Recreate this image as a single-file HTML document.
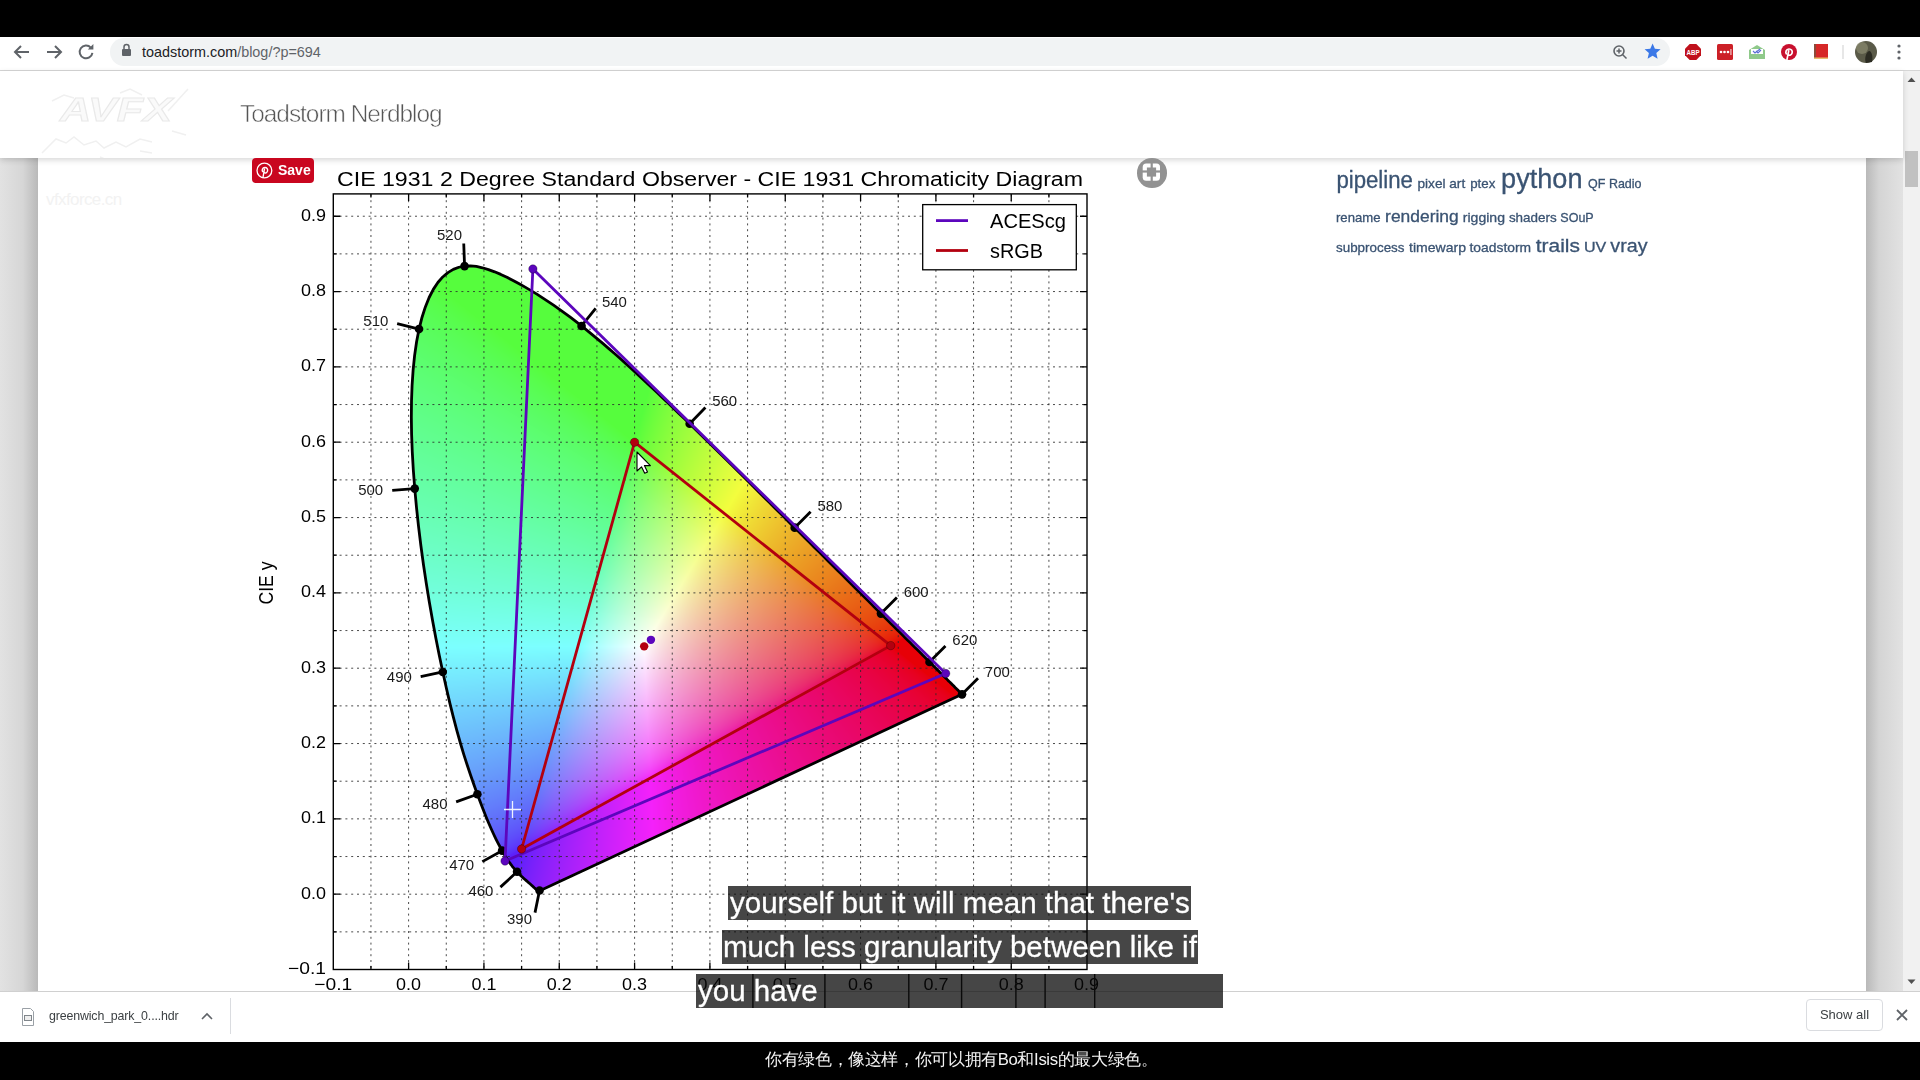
<!DOCTYPE html>
<html><head><meta charset="utf-8">
<style>
*{margin:0;padding:0;box-sizing:border-box}
html,body{width:1920px;height:1080px;overflow:hidden;background:#fff;font-family:"Liberation Sans",sans-serif}
.a{position:absolute}
#top{left:0;top:0;width:1920px;height:37px;background:#000}
#tb{left:0;top:37px;width:1920px;height:34px;background:#fff;border-bottom:1px solid #d6d6d6}
#pill{left:110px;top:38px;width:1560px;height:28px;border-radius:14px;background:#f1f3f4}
#url{left:142px;top:44px;font-size:14.4px;color:#5f6368;white-space:nowrap}
#url b{font-weight:normal;color:#202124}
#lstrip{left:0;top:71px;width:38px;height:921px;background:linear-gradient(90deg,#e2e2e2 0%,#d6d6d6 60%,#b9b9b9 100%)}
#rstrip{left:1866px;top:71px;width:37px;height:921px;background:linear-gradient(90deg,#b9b9b9 0%,#d4d4d4 35%,#e2e2e2 100%)}
#sb{left:1903px;top:71px;width:17px;height:921px;background:#f1f1f1}
#thumb{left:1905px;top:151px;width:13px;height:36px;background:#c1c1c1}
#hdr{left:0;top:71px;width:1903px;height:87px;background:#fff;box-shadow:0 2px 6px rgba(0,0,0,0.16)}
#brand{left:240px;top:100px;font-size:24.4px;color:#555;letter-spacing:-1px;-webkit-text-stroke:0.55px #fff;white-space:nowrap}
#cv{left:400px;top:255px}
#chart{left:0;top:0}
#pin{left:252px;top:158px;width:61.8px;height:24.8px;border-radius:4px;background:#c9061f}
#pin span{position:absolute;left:26px;top:4px;font-size:14px;font-weight:bold;color:#fff}
#fs{left:1137px;top:158.3px;width:29.5px;height:29.5px;border-radius:50%;background:#929292}
#tags{left:1336px;top:160px;width:330px;color:#3b5172;white-space:nowrap}
#tags span{position:absolute}
.sub{position:absolute;background:rgba(8,8,8,0.75);color:#fff;-webkit-text-stroke:0.3px #fff;font-size:29.5px;line-height:34px;height:34.3px;white-space:nowrap}
#dl{left:0;top:991px;width:1920px;height:50px;background:#fff;border-top:1px solid #d0d0d0}
#bot{left:0;top:1042px;width:1920px;height:38px;background:#000}
#zh{left:765px;top:1048px;white-space:nowrap;color:#f4f4f4;font-size:16.7px;letter-spacing:-0.37px}
</style></head><body>
<div id="top" class="a"></div>
<div id="tb" class="a"></div>
<div id="pill" class="a"></div>
<div id="url" class="a"><b>toadstorm.com</b>/blog/?p=694</div>
<svg class="a" style="left:0;top:37px" width="1920" height="34">
 <g fill="none" stroke="#5f6368" stroke-width="2">
  <path d="M29 15H15M21 9l-6 6 6 6"/>
  <path d="M47 15H61M55 9l6 6-6 6"/>
 </g>
 <path d="M90.8 10.6A6.4 6.4 0 1 0 92.4 15.8" fill="none" stroke="#5f6368" stroke-width="2"/>
 <path d="M87.8 12.6H93.4V7Z" fill="#5f6368"/>
 <rect x="122" y="12" width="9" height="7" rx="1" fill="#5f6368"/>
 <path d="M124 12.5V10a2.5 2.5 0 0 1 5 0v2.5" fill="none" stroke="#5f6368" stroke-width="1.5"/>
 <circle cx="1619" cy="14" r="5" fill="none" stroke="#5f6368" stroke-width="1.6"/>
 <path d="M1622.5 17.5l4 4M1619 11.5v5M1616.5 14h5" stroke="#5f6368" stroke-width="1.5"/>
 <path d="M1652.6 6.5l2.3 5.3 5.7.5-4.3 3.8 1.3 5.6-5-3-5 3 1.3-5.6-4.3-3.8 5.7-.5z" fill="#3b78e7"/>
 <path d="M1689.7 7h6.6l4.7 4.7v6.6l-4.7 4.7h-6.6l-4.7-4.7v-6.6z" fill="#c0111c"/>
 <text x="1686.5" y="18" font-size="7" font-weight="bold" fill="#fff" textLength="13" lengthAdjust="spacingAndGlyphs">ABP</text>
 <rect x="1717" y="7" width="16" height="16" rx="1.5" fill="#cc2027"/>
 <g fill="#fff"><circle cx="1721" cy="15" r="1.3"/><circle cx="1724.5" cy="15" r="1.3"/><circle cx="1728" cy="15" r="1.3"/><rect x="1730.5" y="12" width="0.9" height="6"/></g>
 <path d="M1749 13l8-5 8 5v9h-16z" fill="#8fc98a"/>
 <path d="M1751 12h12v5h-12z" fill="#fff"/>
 <path d="M1753 14l2 2 5-4M1756 14l2 2 3-3" stroke="#5b6fd4" stroke-width="1.1" fill="none"/>
 <circle cx="1789" cy="15" r="8" fill="#c8102e"/>
 <path d="M1786.3 16.8c-1-1.8-.3-4.6 2.6-4.8 2.7-.1 3.8 2 3.2 4.1-.6 2-2.4 2.7-3.8 1.7M1788.7 13.9l-1.7 8.4" stroke="#fff" stroke-width="1.7" fill="none" stroke-linecap="round"/>
 <rect x="1814" y="7" width="14" height="15" fill="#d62828"/>
 <rect x="1814" y="7" width="2" height="15" fill="#8b4b3a"/>
 <rect x="1814" y="20.5" width="14" height="1.5" fill="#e8c070"/>
 <rect x="1842.5" y="8" width="1" height="14" fill="#d0d0d0"/>
 <circle cx="1866" cy="15" r="11" fill="#5a5a48"/>
 <circle cx="1862" cy="11" r="6" fill="#8a8a70" opacity="0.7"/>
 <path d="M1866 26c-2-4 0-11 3-12 3 0 4 6 3 11z" fill="#2b2b22"/>
 <g fill="#5f6368"><circle cx="1899" cy="9" r="1.6"/><circle cx="1899" cy="15" r="1.6"/><circle cx="1899" cy="21" r="1.6"/></g>
</svg>
<div id="lstrip" class="a"></div>
<div id="rstrip" class="a"></div>
<div id="sb" class="a"></div>
<div id="thumb" class="a"></div>
<svg class="a" style="left:1903px;top:71px" width="17" height="921"><path d="M4.5 11l4-4.5 4 4.5z" fill="#505050"/><path d="M4.5 908.5l4 4.5 4-4.5z" fill="#505050"/></svg>
<div class="a" style="left:46px;top:190px;font-size:17px;color:#f2f2f2;letter-spacing:-0.6px">vfxforce.cn</div>
<svg class="a" style="left:0;top:0" width="1920" height="1080"><defs><clipPath id="lc"><path d="M540.85 890.21 L540.79 890.22 L540.73 890.22 L540.67 890.23 L540.61 890.24 L540.55 890.24 L540.49 890.25 L540.44 890.26 L540.39 890.26 L540.34 890.27 L540.29 890.27 L540.25 890.26 L540.22 890.25 L540.18 890.26 L540.12 890.27 L540.06 890.30 L539.98 890.34 L539.91 890.38 L539.84 890.42 L539.79 890.45 L539.76 890.46 L539.74 890.46 L539.73 890.45 L539.72 890.45 L539.70 890.44 L539.68 890.45 L539.65 890.46 L539.62 890.48 L539.59 890.49 L539.56 890.50 L539.52 890.50 L539.49 890.49 L539.45 890.48 L539.41 890.48 L539.38 890.48 L539.34 890.49 L539.31 890.51 L539.27 890.54 L539.24 890.56 L539.21 890.57 L539.17 890.59 L539.14 890.59 L539.10 890.60 L539.05 890.60 L539.00 890.60 L538.94 890.60 L538.87 890.60 L538.80 890.59 L538.73 890.59 L538.67 890.58 L538.60 890.58 L538.54 890.59 L538.47 890.59 L538.39 890.58 L538.31 890.57 L538.23 890.56 L538.15 890.54 L538.07 890.52 L537.97 890.48 L537.86 890.43 L537.72 890.36 L537.57 890.27 L537.41 890.18 L537.24 890.08 L537.07 889.97 L536.89 889.84 L536.70 889.70 L536.50 889.55 L536.29 889.38 L536.06 889.20 L535.82 889.00 L535.55 888.79 L535.26 888.56 L534.96 888.31 L534.65 888.04 L534.32 887.76 L533.98 887.45 L533.63 887.12 L533.26 886.77 L532.87 886.40 L532.45 886.02 L532.01 885.62 L531.55 885.21 L531.05 884.77 L530.52 884.30 L529.96 883.81 L529.36 883.28 L528.73 882.73 L528.05 882.14 L527.34 881.51 L526.60 880.86 L525.82 880.18 L525.00 879.47 L524.15 878.72 L523.27 877.92 L522.34 877.07 L521.36 876.16 L520.34 875.18 L519.28 874.14 L518.18 873.02 L517.05 871.82 L515.87 870.55 L514.66 869.18 L513.40 867.68 L512.08 866.02 L510.67 864.16 L509.17 862.04 L507.56 859.64 L505.84 856.95 L504.01 853.95 L502.10 850.66 L500.10 847.05 L498.02 843.10 L495.84 838.77 L493.55 834.01 L491.16 828.78 L488.65 823.02 L486.02 816.71 L483.27 809.83 L480.39 802.34 L477.37 794.24 L474.20 785.49 L470.88 776.03 L467.44 765.82 L463.92 754.82 L460.36 743.00 L456.81 730.38 L453.28 716.98 L449.78 702.79 L446.29 687.79 L442.79 671.99 L439.30 655.42 L435.87 638.15 L432.52 620.30 L429.31 601.98 L426.27 583.31 L423.44 564.44 L420.86 545.46 L418.53 526.43 L416.49 507.45 L414.75 488.61 L413.33 470.04 L412.27 451.93 L411.60 434.35 L411.34 417.35 L411.51 400.92 L412.10 385.05 L413.13 369.81 L414.62 355.33 L416.59 341.72 L419.05 329.08 L421.98 317.46 L425.36 306.90 L429.14 297.51 L433.32 289.36 L437.87 282.51 L442.75 276.95 L447.90 272.60 L453.29 269.39 L458.86 267.25 L464.57 266.10 L470.41 265.88 L476.35 266.48 L482.38 267.76 L488.47 269.58 L494.60 271.82 L500.76 274.41 L506.94 277.30 L513.08 280.43 L519.16 283.73 L525.15 287.14 L531.04 290.63 L536.84 294.18 L542.57 297.82 L548.25 301.56 L553.89 305.40 L559.49 309.34 L565.05 313.36 L570.58 317.48 L576.09 321.68 L581.57 325.96 L587.05 330.34 L592.51 334.79 L597.95 339.32 L603.39 343.91 L608.81 348.57 L614.22 353.28 L619.62 358.06 L625.02 362.89 L630.41 367.76 L635.80 372.68 L641.19 377.65 L646.58 382.66 L651.97 387.71 L657.35 392.78 L662.74 397.89 L668.12 403.03 L673.51 408.19 L678.89 413.38 L684.28 418.58 L689.66 423.80 L695.04 429.04 L700.41 434.28 L705.78 439.53 L711.14 444.79 L716.50 450.05 L721.85 455.31 L727.19 460.58 L732.51 465.84 L737.82 471.09 L743.11 476.33 L748.39 481.57 L753.64 486.79 L758.87 491.99 L764.08 497.17 L769.26 502.33 L774.41 507.46 L779.53 512.57 L784.61 517.63 L789.65 522.66 L794.66 527.65 L799.62 532.59 L804.53 537.49 L809.41 542.34 L814.22 547.14 L818.99 551.87 L823.69 556.55 L828.33 561.17 L832.91 565.72 L837.42 570.20 L841.86 574.63 L846.23 578.98 L850.52 583.27 L854.72 587.46 L858.82 591.55 L862.79 595.52 L866.63 599.35 L870.36 603.06 L873.97 606.66 L877.50 610.17 L880.95 613.60 L884.32 616.97 L887.62 620.25 L890.83 623.44 L893.93 626.53 L896.91 629.49 L899.77 632.33 L902.52 635.05 L905.15 637.66 L907.68 640.17 L910.12 642.59 L912.46 644.92 L914.71 647.16 L916.87 649.31 L918.93 651.36 L920.90 653.33 L922.79 655.22 L924.59 657.01 L926.31 658.73 L927.94 660.37 L929.51 661.93 L931.01 663.41 L932.44 664.84 L933.80 666.19 L935.11 667.49 L936.37 668.74 L937.56 669.92 L938.70 671.06 L939.80 672.15 L940.85 673.20 L941.87 674.22 L942.86 675.20 L943.82 676.16 L944.74 677.07 L945.63 677.96 L946.48 678.81 L947.30 679.63 L948.08 680.41 L948.84 681.16 L949.56 681.88 L950.25 682.57 L950.91 683.23 L951.54 683.86 L952.15 684.47 L952.72 685.04 L953.26 685.57 L953.76 686.08 L954.24 686.55 L954.68 686.98 L955.09 687.40 L955.49 687.79 L955.87 688.17 L956.23 688.53 L956.57 688.87 L956.90 689.20 L957.21 689.51 L957.50 689.80 L957.77 690.07 L958.03 690.33 L958.27 690.57 L958.49 690.79 L958.69 690.99 L958.87 691.17 L959.03 691.33 L959.18 691.48 L959.33 691.63 L959.47 691.77 L959.61 691.91 L959.75 692.05 L959.88 692.18 L960.01 692.31 L960.13 692.43 L960.24 692.54 L960.35 692.65 L960.45 692.75 L960.56 692.86 L960.66 692.96 L960.77 693.07 L960.88 693.18 L960.98 693.28 L961.08 693.38 L961.18 693.48 L961.28 693.58 L961.38 693.68 L961.47 693.77 L961.56 693.86 L961.63 693.93 L961.69 693.99 L961.74 694.04 L961.78 694.08 L961.82 694.12 L961.85 694.15 L961.89 694.19 L961.92 694.22 L961.94 694.24 L961.97 694.27 L961.99 694.29 L962.01 694.31 L962.03 694.33 L962.04 694.34 L962.04 694.34 L962.04 694.34 L962.04 694.34 L962.04 694.34 L962.04 694.34 L962.04 694.34 L962.04 694.34 L962.04 694.34 L962.04 694.34 L962.04 694.34 L962.04 694.34 L962.04 694.34 L962.04 694.34 L962.04 694.34 L962.04 694.34 L962.04 694.34 L962.04 694.34 L962.04 694.34 L962.04 694.34 L962.04 694.34 L962.04 694.34 L962.04 694.34 L962.04 694.34 L962.04 694.34 L962.04 694.34 L962.04 694.34 L962.04 694.34 L962.04 694.34 L962.04 694.34 L962.04 694.34 L962.04 694.34 L962.04 694.34 L962.04 694.34 L962.04 694.34 L962.04 694.34 L962.04 694.34 L962.04 694.34 L962.04 694.34 L962.04 694.34 L962.04 694.34 L962.04 694.34 L962.04 694.34 L962.04 694.34 L962.04 694.34 L962.04 694.34 L962.04 694.34 L962.04 694.34 L962.04 694.34 L962.04 694.34 L962.04 694.34 L962.04 694.34 L962.04 694.34 L962.04 694.34 L962.04 694.34 L962.04 694.34 L962.04 694.34 L962.04 694.34 L962.04 694.34 L962.04 694.34 L962.04 694.34 L962.04 694.34 L962.04 694.34 L962.04 694.34 L962.04 694.34 L962.04 694.34 L962.04 694.34 L962.04 694.34 L962.04 694.34 L962.04 694.34 L962.04 694.34 L962.04 694.34 L962.04 694.34 L962.04 694.34 L962.04 694.34 L962.04 694.34 L962.04 694.34 L962.04 694.34 L962.04 694.34 L962.04 694.34 L962.04 694.34 L962.04 694.34 L962.04 694.34 L962.04 694.34 L962.04 694.34 L962.04 694.34 L962.04 694.34 L962.04 694.34 L962.04 694.34 L962.04 694.34 L962.04 694.34 L962.04 694.34 L962.04 694.34 L962.04 694.34 L962.04 694.34 L962.04 694.34 L962.04 694.34 L962.04 694.34 L962.04 694.34 L962.04 694.34 L962.04 694.34 L962.04 694.34 L962.04 694.34 L962.04 694.34 L962.04 694.34 L962.04 694.34 L962.04 694.34 L962.04 694.34 L962.04 694.34 L962.04 694.34 L962.04 694.34 L962.04 694.34 L962.04 694.34 L962.04 694.34 L962.04 694.34 L962.04 694.34 L962.04 694.34 L962.04 694.34 L962.04 694.34 L962.04 694.34 L962.04 694.34 L962.04 694.34 L962.04 694.34 L962.04 694.34 L962.04 694.34 L962.04 694.34 L962.04 694.34 L962.04 694.34 L962.04 694.34 L962.04 694.34 L962.04 694.34 L962.04 694.34Z"/></clipPath><filter id="bl" x="-5%" y="-5%" width="110%" height="110%"><feGaussianBlur stdDeviation="6"/></filter></defs><g clip-path="url(#lc)"><g filter="url(#bl)"><rect x="448" y="255" width="12" height="12" fill="#56fd3d"/><rect x="460" y="255" width="12" height="12" fill="#56fd3d"/><rect x="472" y="255" width="12" height="12" fill="#56fd3d"/><rect x="484" y="255" width="12" height="12" fill="#56fd3d"/><rect x="436" y="267" width="12" height="12" fill="#56fd3d"/><rect x="448" y="267" width="12" height="12" fill="#56fd3d"/><rect x="460" y="267" width="12" height="12" fill="#56fd3d"/><rect x="472" y="267" width="12" height="12" fill="#56fd3d"/><rect x="484" y="267" width="12" height="12" fill="#56fd3d"/><rect x="496" y="267" width="12" height="12" fill="#56fd3d"/><rect x="508" y="267" width="12" height="12" fill="#56fd3d"/><rect x="424" y="279" width="12" height="12" fill="#57fd41"/><rect x="436" y="279" width="12" height="12" fill="#56fd3d"/><rect x="448" y="279" width="12" height="12" fill="#56fd3d"/><rect x="460" y="279" width="12" height="12" fill="#56fd3d"/><rect x="472" y="279" width="12" height="12" fill="#56fd3d"/><rect x="484" y="279" width="12" height="12" fill="#56fd3d"/><rect x="496" y="279" width="12" height="12" fill="#56fd3d"/><rect x="508" y="279" width="12" height="12" fill="#56fd3d"/><rect x="520" y="279" width="12" height="12" fill="#56fd3d"/><rect x="532" y="279" width="12" height="12" fill="#56fd3d"/><rect x="412" y="291" width="12" height="12" fill="#58fd4f"/><rect x="424" y="291" width="12" height="12" fill="#57fd49"/><rect x="436" y="291" width="12" height="12" fill="#57fd43"/><rect x="448" y="291" width="12" height="12" fill="#56fd3d"/><rect x="460" y="291" width="12" height="12" fill="#56fd3d"/><rect x="472" y="291" width="12" height="12" fill="#56fd3d"/><rect x="484" y="291" width="12" height="12" fill="#56fd3d"/><rect x="496" y="291" width="12" height="12" fill="#56fd3d"/><rect x="508" y="291" width="12" height="12" fill="#56fd3d"/><rect x="520" y="291" width="12" height="12" fill="#56fd3d"/><rect x="532" y="291" width="12" height="12" fill="#56fd3d"/><rect x="544" y="291" width="12" height="12" fill="#56fd3d"/><rect x="556" y="291" width="12" height="12" fill="#56fd3d"/><rect x="412" y="303" width="12" height="12" fill="#59fd56"/><rect x="424" y="303" width="12" height="12" fill="#58fd51"/><rect x="436" y="303" width="12" height="12" fill="#58fd4b"/><rect x="448" y="303" width="12" height="12" fill="#57fd45"/><rect x="460" y="303" width="12" height="12" fill="#56fd3d"/><rect x="472" y="303" width="12" height="12" fill="#56fd3d"/><rect x="484" y="303" width="12" height="12" fill="#56fd3d"/><rect x="496" y="303" width="12" height="12" fill="#56fd3d"/><rect x="508" y="303" width="12" height="12" fill="#56fd3d"/><rect x="520" y="303" width="12" height="12" fill="#56fd3d"/><rect x="532" y="303" width="12" height="12" fill="#56fd3d"/><rect x="544" y="303" width="12" height="12" fill="#56fd3d"/><rect x="556" y="303" width="12" height="12" fill="#56fd3d"/><rect x="568" y="303" width="12" height="12" fill="#56fd3d"/><rect x="412" y="315" width="12" height="12" fill="#59fd5c"/><rect x="424" y="315" width="12" height="12" fill="#59fd57"/><rect x="436" y="315" width="12" height="12" fill="#58fd53"/><rect x="448" y="315" width="12" height="12" fill="#58fd4d"/><rect x="460" y="315" width="12" height="12" fill="#57fd47"/><rect x="472" y="315" width="12" height="12" fill="#57fd40"/><rect x="484" y="315" width="12" height="12" fill="#56fd3d"/><rect x="496" y="315" width="12" height="12" fill="#56fd3d"/><rect x="508" y="315" width="12" height="12" fill="#56fd3d"/><rect x="520" y="315" width="12" height="12" fill="#56fd3d"/><rect x="532" y="315" width="12" height="12" fill="#56fd3d"/><rect x="544" y="315" width="12" height="12" fill="#56fd3d"/><rect x="556" y="315" width="12" height="12" fill="#56fd3d"/><rect x="568" y="315" width="12" height="12" fill="#56fd3d"/><rect x="580" y="315" width="12" height="12" fill="#56fd3d"/><rect x="412" y="327" width="12" height="12" fill="#5afd62"/><rect x="424" y="327" width="12" height="12" fill="#5afd5e"/><rect x="436" y="327" width="12" height="12" fill="#59fd59"/><rect x="448" y="327" width="12" height="12" fill="#59fd54"/><rect x="460" y="327" width="12" height="12" fill="#58fd4f"/><rect x="472" y="327" width="12" height="12" fill="#57fd49"/><rect x="484" y="327" width="12" height="12" fill="#57fd42"/><rect x="496" y="327" width="12" height="12" fill="#56fd3d"/><rect x="508" y="327" width="12" height="12" fill="#56fd3d"/><rect x="520" y="327" width="12" height="12" fill="#56fd3d"/><rect x="532" y="327" width="12" height="12" fill="#56fd3d"/><rect x="544" y="327" width="12" height="12" fill="#56fd3d"/><rect x="556" y="327" width="12" height="12" fill="#56fd3d"/><rect x="568" y="327" width="12" height="12" fill="#56fd3d"/><rect x="580" y="327" width="12" height="12" fill="#56fd3d"/><rect x="592" y="327" width="12" height="12" fill="#56fd3d"/><rect x="400" y="339" width="12" height="12" fill="#5bfd6b"/><rect x="412" y="339" width="12" height="12" fill="#5bfd68"/><rect x="424" y="339" width="12" height="12" fill="#5afd64"/><rect x="436" y="339" width="12" height="12" fill="#5afd60"/><rect x="448" y="339" width="12" height="12" fill="#59fd5b"/><rect x="460" y="339" width="12" height="12" fill="#59fd57"/><rect x="472" y="339" width="12" height="12" fill="#58fd51"/><rect x="484" y="339" width="12" height="12" fill="#58fd4b"/><rect x="496" y="339" width="12" height="12" fill="#57fd44"/><rect x="508" y="339" width="12" height="12" fill="#56fd3d"/><rect x="520" y="339" width="12" height="12" fill="#56fd3d"/><rect x="532" y="339" width="12" height="12" fill="#56fd3d"/><rect x="544" y="339" width="12" height="12" fill="#56fd3d"/><rect x="556" y="339" width="12" height="12" fill="#56fd3d"/><rect x="568" y="339" width="12" height="12" fill="#56fd3d"/><rect x="580" y="339" width="12" height="12" fill="#56fd3d"/><rect x="592" y="339" width="12" height="12" fill="#56fd3d"/><rect x="604" y="339" width="12" height="12" fill="#56fd3d"/><rect x="616" y="339" width="12" height="12" fill="#56fd3d"/><rect x="400" y="351" width="12" height="12" fill="#5cfe71"/><rect x="412" y="351" width="12" height="12" fill="#5cfe6d"/><rect x="424" y="351" width="12" height="12" fill="#5bfd6a"/><rect x="436" y="351" width="12" height="12" fill="#5bfd66"/><rect x="448" y="351" width="12" height="12" fill="#5afd62"/><rect x="460" y="351" width="12" height="12" fill="#5afd5d"/><rect x="472" y="351" width="12" height="12" fill="#59fd59"/><rect x="484" y="351" width="12" height="12" fill="#58fd53"/><rect x="496" y="351" width="12" height="12" fill="#58fd4d"/><rect x="508" y="351" width="12" height="12" fill="#57fd46"/><rect x="520" y="351" width="12" height="12" fill="#57fd3e"/><rect x="532" y="351" width="12" height="12" fill="#56fd3d"/><rect x="544" y="351" width="12" height="12" fill="#56fd3d"/><rect x="556" y="351" width="12" height="12" fill="#56fd3d"/><rect x="568" y="351" width="12" height="12" fill="#56fd3d"/><rect x="580" y="351" width="12" height="12" fill="#56fd3d"/><rect x="592" y="351" width="12" height="12" fill="#56fd3d"/><rect x="604" y="351" width="12" height="12" fill="#56fd3d"/><rect x="616" y="351" width="12" height="12" fill="#56fd3d"/><rect x="628" y="351" width="12" height="12" fill="#56fd3d"/><rect x="400" y="363" width="12" height="12" fill="#5dfe76"/><rect x="412" y="363" width="12" height="12" fill="#5cfe73"/><rect x="424" y="363" width="12" height="12" fill="#5cfe70"/><rect x="436" y="363" width="12" height="12" fill="#5bfd6c"/><rect x="448" y="363" width="12" height="12" fill="#5bfd68"/><rect x="460" y="363" width="12" height="12" fill="#5afd64"/><rect x="472" y="363" width="12" height="12" fill="#5afd60"/><rect x="484" y="363" width="12" height="12" fill="#59fd5b"/><rect x="496" y="363" width="12" height="12" fill="#59fd55"/><rect x="508" y="363" width="12" height="12" fill="#58fd4f"/><rect x="520" y="363" width="12" height="12" fill="#57fd49"/><rect x="532" y="363" width="12" height="12" fill="#57fd40"/><rect x="544" y="363" width="12" height="12" fill="#56fd3d"/><rect x="556" y="363" width="12" height="12" fill="#56fd3d"/><rect x="568" y="363" width="12" height="12" fill="#56fd3d"/><rect x="580" y="363" width="12" height="12" fill="#56fd3d"/><rect x="592" y="363" width="12" height="12" fill="#56fd3d"/><rect x="604" y="363" width="12" height="12" fill="#56fd3d"/><rect x="616" y="363" width="12" height="12" fill="#56fd3d"/><rect x="628" y="363" width="12" height="12" fill="#56fd3d"/><rect x="640" y="363" width="12" height="12" fill="#56fd3d"/><rect x="400" y="375" width="12" height="12" fill="#5efe7b"/><rect x="412" y="375" width="12" height="12" fill="#5dfe78"/><rect x="424" y="375" width="12" height="12" fill="#5dfe75"/><rect x="436" y="375" width="12" height="12" fill="#5cfe72"/><rect x="448" y="375" width="12" height="12" fill="#5cfe6e"/><rect x="460" y="375" width="12" height="12" fill="#5bfd6b"/><rect x="472" y="375" width="12" height="12" fill="#5bfd66"/><rect x="484" y="375" width="12" height="12" fill="#5afd62"/><rect x="496" y="375" width="12" height="12" fill="#5afd5d"/><rect x="508" y="375" width="12" height="12" fill="#59fd58"/><rect x="520" y="375" width="12" height="12" fill="#58fd52"/><rect x="532" y="375" width="12" height="12" fill="#58fd4b"/><rect x="544" y="375" width="12" height="12" fill="#57fd43"/><rect x="556" y="375" width="12" height="12" fill="#56fd3d"/><rect x="568" y="375" width="12" height="12" fill="#56fd3d"/><rect x="580" y="375" width="12" height="12" fill="#56fd3d"/><rect x="592" y="375" width="12" height="12" fill="#56fd3d"/><rect x="604" y="375" width="12" height="12" fill="#56fd3d"/><rect x="616" y="375" width="12" height="12" fill="#56fd3d"/><rect x="628" y="375" width="12" height="12" fill="#56fd3d"/><rect x="640" y="375" width="12" height="12" fill="#56fd3d"/><rect x="652" y="375" width="12" height="12" fill="#62fd3d"/><rect x="400" y="387" width="12" height="12" fill="#5efe81"/><rect x="412" y="387" width="12" height="12" fill="#5efe7e"/><rect x="424" y="387" width="12" height="12" fill="#5efe7b"/><rect x="436" y="387" width="12" height="12" fill="#5dfe78"/><rect x="448" y="387" width="12" height="12" fill="#5dfe74"/><rect x="460" y="387" width="12" height="12" fill="#5cfe71"/><rect x="472" y="387" width="12" height="12" fill="#5cfe6d"/><rect x="484" y="387" width="12" height="12" fill="#5bfd69"/><rect x="496" y="387" width="12" height="12" fill="#5afd64"/><rect x="508" y="387" width="12" height="12" fill="#5afd5f"/><rect x="520" y="387" width="12" height="12" fill="#59fd5a"/><rect x="532" y="387" width="12" height="12" fill="#59fd54"/><rect x="544" y="387" width="12" height="12" fill="#58fd4d"/><rect x="556" y="387" width="12" height="12" fill="#57fd45"/><rect x="568" y="387" width="12" height="12" fill="#56fd3d"/><rect x="580" y="387" width="12" height="12" fill="#56fd3d"/><rect x="592" y="387" width="12" height="12" fill="#56fd3d"/><rect x="604" y="387" width="12" height="12" fill="#56fd3d"/><rect x="616" y="387" width="12" height="12" fill="#56fd3d"/><rect x="628" y="387" width="12" height="12" fill="#56fd3d"/><rect x="640" y="387" width="12" height="12" fill="#56fd3d"/><rect x="652" y="387" width="12" height="12" fill="#68fd3d"/><rect x="664" y="387" width="12" height="12" fill="#79fd3d"/><rect x="400" y="399" width="12" height="12" fill="#5ffe86"/><rect x="412" y="399" width="12" height="12" fill="#5ffe83"/><rect x="424" y="399" width="12" height="12" fill="#5efe80"/><rect x="436" y="399" width="12" height="12" fill="#5efe7d"/><rect x="448" y="399" width="12" height="12" fill="#5dfe7a"/><rect x="460" y="399" width="12" height="12" fill="#5dfe77"/><rect x="472" y="399" width="12" height="12" fill="#5cfe73"/><rect x="484" y="399" width="12" height="12" fill="#5cfe6f"/><rect x="496" y="399" width="12" height="12" fill="#5bfd6b"/><rect x="508" y="399" width="12" height="12" fill="#5bfd67"/><rect x="520" y="399" width="12" height="12" fill="#5afd62"/><rect x="532" y="399" width="12" height="12" fill="#59fd5d"/><rect x="544" y="399" width="12" height="12" fill="#59fd57"/><rect x="556" y="399" width="12" height="12" fill="#58fd50"/><rect x="568" y="399" width="12" height="12" fill="#57fd48"/><rect x="580" y="399" width="12" height="12" fill="#57fd3e"/><rect x="592" y="399" width="12" height="12" fill="#56fd3d"/><rect x="604" y="399" width="12" height="12" fill="#56fd3d"/><rect x="616" y="399" width="12" height="12" fill="#56fd3d"/><rect x="628" y="399" width="12" height="12" fill="#56fd3d"/><rect x="640" y="399" width="12" height="12" fill="#59fd3d"/><rect x="652" y="399" width="12" height="12" fill="#6dfd3d"/><rect x="664" y="399" width="12" height="12" fill="#7efd3d"/><rect x="676" y="399" width="12" height="12" fill="#8dfd3d"/><rect x="400" y="411" width="12" height="12" fill="#60fe8b"/><rect x="412" y="411" width="12" height="12" fill="#60fe88"/><rect x="424" y="411" width="12" height="12" fill="#5ffe86"/><rect x="436" y="411" width="12" height="12" fill="#5ffe83"/><rect x="448" y="411" width="12" height="12" fill="#5efe80"/><rect x="460" y="411" width="12" height="12" fill="#5efe7d"/><rect x="472" y="411" width="12" height="12" fill="#5dfe7a"/><rect x="484" y="411" width="12" height="12" fill="#5dfe76"/><rect x="496" y="411" width="12" height="12" fill="#5cfe72"/><rect x="508" y="411" width="12" height="12" fill="#5cfe6e"/><rect x="520" y="411" width="12" height="12" fill="#5bfd6a"/><rect x="532" y="411" width="12" height="12" fill="#5afd65"/><rect x="544" y="411" width="12" height="12" fill="#5afd5f"/><rect x="556" y="411" width="12" height="12" fill="#59fd59"/><rect x="568" y="411" width="12" height="12" fill="#58fd53"/><rect x="580" y="411" width="12" height="12" fill="#58fd4b"/><rect x="592" y="411" width="12" height="12" fill="#57fd41"/><rect x="604" y="411" width="12" height="12" fill="#56fd3d"/><rect x="616" y="411" width="12" height="12" fill="#56fd3d"/><rect x="628" y="411" width="12" height="12" fill="#56fd3d"/><rect x="640" y="411" width="12" height="12" fill="#5ffd3d"/><rect x="652" y="411" width="12" height="12" fill="#73fd3d"/><rect x="664" y="411" width="12" height="12" fill="#83fd3d"/><rect x="676" y="411" width="12" height="12" fill="#92fd3d"/><rect x="688" y="411" width="12" height="12" fill="#a0fd3d"/><rect x="400" y="423" width="12" height="12" fill="#61fe90"/><rect x="412" y="423" width="12" height="12" fill="#61fe8e"/><rect x="424" y="423" width="12" height="12" fill="#60fe8b"/><rect x="436" y="423" width="12" height="12" fill="#60fe89"/><rect x="448" y="423" width="12" height="12" fill="#5ffe86"/><rect x="460" y="423" width="12" height="12" fill="#5ffe83"/><rect x="472" y="423" width="12" height="12" fill="#5efe80"/><rect x="484" y="423" width="12" height="12" fill="#5efe7c"/><rect x="496" y="423" width="12" height="12" fill="#5dfe79"/><rect x="508" y="423" width="12" height="12" fill="#5dfe75"/><rect x="520" y="423" width="12" height="12" fill="#5cfe71"/><rect x="532" y="423" width="12" height="12" fill="#5bfd6c"/><rect x="544" y="423" width="12" height="12" fill="#5bfd67"/><rect x="556" y="423" width="12" height="12" fill="#5afd62"/><rect x="568" y="423" width="12" height="12" fill="#59fd5c"/><rect x="580" y="423" width="12" height="12" fill="#59fd55"/><rect x="592" y="423" width="12" height="12" fill="#58fd4e"/><rect x="604" y="423" width="12" height="12" fill="#57fd44"/><rect x="616" y="423" width="12" height="12" fill="#56fd3d"/><rect x="628" y="423" width="12" height="12" fill="#56fd3d"/><rect x="640" y="423" width="12" height="12" fill="#66fd3d"/><rect x="652" y="423" width="12" height="12" fill="#78fd3d"/><rect x="664" y="423" width="12" height="12" fill="#89fd3d"/><rect x="676" y="423" width="12" height="12" fill="#97fd3d"/><rect x="688" y="423" width="12" height="12" fill="#a5fd3d"/><rect x="700" y="423" width="12" height="12" fill="#b2fd3d"/><rect x="400" y="435" width="12" height="12" fill="#62fe95"/><rect x="412" y="435" width="12" height="12" fill="#62fe93"/><rect x="424" y="435" width="12" height="12" fill="#61fe91"/><rect x="436" y="435" width="12" height="12" fill="#61fe8e"/><rect x="448" y="435" width="12" height="12" fill="#60fe8c"/><rect x="460" y="435" width="12" height="12" fill="#60fe89"/><rect x="472" y="435" width="12" height="12" fill="#5ffe86"/><rect x="484" y="435" width="12" height="12" fill="#5ffe83"/><rect x="496" y="435" width="12" height="12" fill="#5efe7f"/><rect x="508" y="435" width="12" height="12" fill="#5efe7c"/><rect x="520" y="435" width="12" height="12" fill="#5dfe78"/><rect x="532" y="435" width="12" height="12" fill="#5cfe74"/><rect x="544" y="435" width="12" height="12" fill="#5cfe6f"/><rect x="556" y="435" width="12" height="12" fill="#5bfd6a"/><rect x="568" y="435" width="12" height="12" fill="#5afd65"/><rect x="580" y="435" width="12" height="12" fill="#5afd5f"/><rect x="592" y="435" width="12" height="12" fill="#59fd58"/><rect x="604" y="435" width="12" height="12" fill="#58fd51"/><rect x="616" y="435" width="12" height="12" fill="#57fd47"/><rect x="628" y="435" width="12" height="12" fill="#56fd3d"/><rect x="640" y="435" width="12" height="12" fill="#6cfd3d"/><rect x="652" y="435" width="12" height="12" fill="#7efd3d"/><rect x="664" y="435" width="12" height="12" fill="#8efd3d"/><rect x="676" y="435" width="12" height="12" fill="#9dfd3d"/><rect x="688" y="435" width="12" height="12" fill="#aafd3d"/><rect x="700" y="435" width="12" height="12" fill="#b7fd3d"/><rect x="712" y="435" width="12" height="12" fill="#c3fd3d"/><rect x="400" y="447" width="12" height="12" fill="#63fe9b"/><rect x="412" y="447" width="12" height="12" fill="#63fe98"/><rect x="424" y="447" width="12" height="12" fill="#62fe96"/><rect x="436" y="447" width="12" height="12" fill="#62fe94"/><rect x="448" y="447" width="12" height="12" fill="#61fe91"/><rect x="460" y="447" width="12" height="12" fill="#61fe8f"/><rect x="472" y="447" width="12" height="12" fill="#60fe8c"/><rect x="484" y="447" width="12" height="12" fill="#60fe89"/><rect x="496" y="447" width="12" height="12" fill="#5ffe86"/><rect x="508" y="447" width="12" height="12" fill="#5ffe82"/><rect x="520" y="447" width="12" height="12" fill="#5efe7f"/><rect x="532" y="447" width="12" height="12" fill="#5efe7b"/><rect x="544" y="447" width="12" height="12" fill="#5dfe77"/><rect x="556" y="447" width="12" height="12" fill="#5cfe72"/><rect x="568" y="447" width="12" height="12" fill="#5cfe6d"/><rect x="580" y="447" width="12" height="12" fill="#5bfd68"/><rect x="592" y="447" width="12" height="12" fill="#5afd62"/><rect x="604" y="447" width="12" height="12" fill="#59fd5b"/><rect x="616" y="447" width="12" height="12" fill="#58fd54"/><rect x="628" y="447" width="12" height="12" fill="#5dfd4b"/><rect x="640" y="447" width="12" height="12" fill="#72fd3f"/><rect x="652" y="447" width="12" height="12" fill="#84fd3d"/><rect x="664" y="447" width="12" height="12" fill="#94fd3d"/><rect x="676" y="447" width="12" height="12" fill="#a2fd3d"/><rect x="688" y="447" width="12" height="12" fill="#b0fd3d"/><rect x="700" y="447" width="12" height="12" fill="#bdfd3d"/><rect x="712" y="447" width="12" height="12" fill="#c9fd3d"/><rect x="724" y="447" width="12" height="12" fill="#d5fd3e"/><rect x="400" y="459" width="12" height="12" fill="#64fea0"/><rect x="412" y="459" width="12" height="12" fill="#64fe9e"/><rect x="424" y="459" width="12" height="12" fill="#63fe9c"/><rect x="436" y="459" width="12" height="12" fill="#63fe99"/><rect x="448" y="459" width="12" height="12" fill="#62fe97"/><rect x="460" y="459" width="12" height="12" fill="#62fe95"/><rect x="472" y="459" width="12" height="12" fill="#62fe92"/><rect x="484" y="459" width="12" height="12" fill="#61fe8f"/><rect x="496" y="459" width="12" height="12" fill="#60fe8c"/><rect x="508" y="459" width="12" height="12" fill="#60fe89"/><rect x="520" y="459" width="12" height="12" fill="#5ffe86"/><rect x="532" y="459" width="12" height="12" fill="#5ffe82"/><rect x="544" y="459" width="12" height="12" fill="#5efe7e"/><rect x="556" y="459" width="12" height="12" fill="#5dfe7a"/><rect x="568" y="459" width="12" height="12" fill="#5dfe76"/><rect x="580" y="459" width="12" height="12" fill="#5cfe71"/><rect x="592" y="459" width="12" height="12" fill="#5bfd6b"/><rect x="604" y="459" width="12" height="12" fill="#5bfd65"/><rect x="616" y="459" width="12" height="12" fill="#5afd5f"/><rect x="628" y="459" width="12" height="12" fill="#65fd57"/><rect x="640" y="459" width="12" height="12" fill="#79fd4e"/><rect x="652" y="459" width="12" height="12" fill="#8afd43"/><rect x="664" y="459" width="12" height="12" fill="#9afd3d"/><rect x="676" y="459" width="12" height="12" fill="#a8fd3d"/><rect x="688" y="459" width="12" height="12" fill="#b6fd3d"/><rect x="700" y="459" width="12" height="12" fill="#c3fd3d"/><rect x="712" y="459" width="12" height="12" fill="#cffd3d"/><rect x="724" y="459" width="12" height="12" fill="#dbfd3e"/><rect x="736" y="459" width="12" height="12" fill="#e7fd3e"/><rect x="400" y="471" width="12" height="12" fill="#65fea5"/><rect x="412" y="471" width="12" height="12" fill="#65fea3"/><rect x="424" y="471" width="12" height="12" fill="#64fea1"/><rect x="436" y="471" width="12" height="12" fill="#64fe9f"/><rect x="448" y="471" width="12" height="12" fill="#64fe9d"/><rect x="460" y="471" width="12" height="12" fill="#63fe9a"/><rect x="472" y="471" width="12" height="12" fill="#63fe98"/><rect x="484" y="471" width="12" height="12" fill="#62fe95"/><rect x="496" y="471" width="12" height="12" fill="#62fe93"/><rect x="508" y="471" width="12" height="12" fill="#61fe90"/><rect x="520" y="471" width="12" height="12" fill="#61fe8d"/><rect x="532" y="471" width="12" height="12" fill="#60fe89"/><rect x="544" y="471" width="12" height="12" fill="#5ffe86"/><rect x="556" y="471" width="12" height="12" fill="#5ffe82"/><rect x="568" y="471" width="12" height="12" fill="#5efe7e"/><rect x="580" y="471" width="12" height="12" fill="#5dfe79"/><rect x="592" y="471" width="12" height="12" fill="#5dfe74"/><rect x="604" y="471" width="12" height="12" fill="#5cfe6f"/><rect x="616" y="471" width="12" height="12" fill="#5bfd69"/><rect x="628" y="471" width="12" height="12" fill="#6dfd62"/><rect x="640" y="471" width="12" height="12" fill="#80fd5b"/><rect x="652" y="471" width="12" height="12" fill="#91fd52"/><rect x="664" y="471" width="12" height="12" fill="#a0fd47"/><rect x="676" y="471" width="12" height="12" fill="#aefd3d"/><rect x="688" y="471" width="12" height="12" fill="#bcfd3d"/><rect x="700" y="471" width="12" height="12" fill="#c9fd3d"/><rect x="712" y="471" width="12" height="12" fill="#d6fd3e"/><rect x="724" y="471" width="12" height="12" fill="#e2fd3e"/><rect x="736" y="471" width="12" height="12" fill="#eefd3e"/><rect x="748" y="471" width="12" height="12" fill="#f2f53c"/><rect x="400" y="483" width="12" height="12" fill="#66feaa"/><rect x="412" y="483" width="12" height="12" fill="#66fea9"/><rect x="424" y="483" width="12" height="12" fill="#66fea7"/><rect x="436" y="483" width="12" height="12" fill="#65fea5"/><rect x="448" y="483" width="12" height="12" fill="#65fea3"/><rect x="460" y="483" width="12" height="12" fill="#64fea0"/><rect x="472" y="483" width="12" height="12" fill="#64fe9e"/><rect x="484" y="483" width="12" height="12" fill="#63fe9c"/><rect x="496" y="483" width="12" height="12" fill="#63fe99"/><rect x="508" y="483" width="12" height="12" fill="#62fe96"/><rect x="520" y="483" width="12" height="12" fill="#62fe93"/><rect x="532" y="483" width="12" height="12" fill="#61fe90"/><rect x="544" y="483" width="12" height="12" fill="#61fe8d"/><rect x="556" y="483" width="12" height="12" fill="#60fe8a"/><rect x="568" y="483" width="12" height="12" fill="#5ffe86"/><rect x="580" y="483" width="12" height="12" fill="#5ffe82"/><rect x="592" y="483" width="12" height="12" fill="#5efe7d"/><rect x="604" y="483" width="12" height="12" fill="#5dfe78"/><rect x="616" y="483" width="12" height="12" fill="#5dfe73"/><rect x="628" y="483" width="12" height="12" fill="#74fe6d"/><rect x="640" y="483" width="12" height="12" fill="#87fd66"/><rect x="652" y="483" width="12" height="12" fill="#98fd5e"/><rect x="664" y="483" width="12" height="12" fill="#a7fd56"/><rect x="676" y="483" width="12" height="12" fill="#b5fd4b"/><rect x="688" y="483" width="12" height="12" fill="#c2fd3d"/><rect x="700" y="483" width="12" height="12" fill="#d0fd3d"/><rect x="712" y="483" width="12" height="12" fill="#dcfd3e"/><rect x="724" y="483" width="12" height="12" fill="#e9fd3e"/><rect x="736" y="483" width="12" height="12" fill="#f2fa3d"/><rect x="748" y="483" width="12" height="12" fill="#f1ed39"/><rect x="760" y="483" width="12" height="12" fill="#f0e136"/><rect x="400" y="495" width="12" height="12" fill="#68feb0"/><rect x="412" y="495" width="12" height="12" fill="#67feae"/><rect x="424" y="495" width="12" height="12" fill="#67feac"/><rect x="436" y="495" width="12" height="12" fill="#66feab"/><rect x="448" y="495" width="12" height="12" fill="#66fea9"/><rect x="460" y="495" width="12" height="12" fill="#66fea7"/><rect x="472" y="495" width="12" height="12" fill="#65fea4"/><rect x="484" y="495" width="12" height="12" fill="#65fea2"/><rect x="496" y="495" width="12" height="12" fill="#64fea0"/><rect x="508" y="495" width="12" height="12" fill="#64fe9d"/><rect x="520" y="495" width="12" height="12" fill="#63fe9a"/><rect x="532" y="495" width="12" height="12" fill="#63fe98"/><rect x="544" y="495" width="12" height="12" fill="#62fe94"/><rect x="556" y="495" width="12" height="12" fill="#61fe91"/><rect x="568" y="495" width="12" height="12" fill="#61fe8e"/><rect x="580" y="495" width="12" height="12" fill="#60fe8a"/><rect x="592" y="495" width="12" height="12" fill="#5ffe86"/><rect x="604" y="495" width="12" height="12" fill="#5ffe81"/><rect x="616" y="495" width="12" height="12" fill="#66fe7c"/><rect x="628" y="495" width="12" height="12" fill="#7cfe77"/><rect x="640" y="495" width="12" height="12" fill="#8efe71"/><rect x="652" y="495" width="12" height="12" fill="#9ffd6a"/><rect x="664" y="495" width="12" height="12" fill="#aefd63"/><rect x="676" y="495" width="12" height="12" fill="#bcfd5a"/><rect x="688" y="495" width="12" height="12" fill="#c9fd4f"/><rect x="700" y="495" width="12" height="12" fill="#d6fd41"/><rect x="712" y="495" width="12" height="12" fill="#e4fd3e"/><rect x="724" y="495" width="12" height="12" fill="#f0fd3e"/><rect x="736" y="495" width="12" height="12" fill="#f2f23b"/><rect x="748" y="495" width="12" height="12" fill="#f0e537"/><rect x="760" y="495" width="12" height="12" fill="#efda34"/><rect x="772" y="495" width="12" height="12" fill="#efd032"/><rect x="400" y="507" width="12" height="12" fill="#69feb5"/><rect x="412" y="507" width="12" height="12" fill="#68feb4"/><rect x="424" y="507" width="12" height="12" fill="#68feb2"/><rect x="436" y="507" width="12" height="12" fill="#68feb0"/><rect x="448" y="507" width="12" height="12" fill="#67feaf"/><rect x="460" y="507" width="12" height="12" fill="#67fead"/><rect x="472" y="507" width="12" height="12" fill="#66feab"/><rect x="484" y="507" width="12" height="12" fill="#66fea9"/><rect x="496" y="507" width="12" height="12" fill="#66fea6"/><rect x="508" y="507" width="12" height="12" fill="#65fea4"/><rect x="520" y="507" width="12" height="12" fill="#65fea1"/><rect x="532" y="507" width="12" height="12" fill="#64fe9f"/><rect x="544" y="507" width="12" height="12" fill="#63fe9c"/><rect x="556" y="507" width="12" height="12" fill="#63fe99"/><rect x="568" y="507" width="12" height="12" fill="#62fe96"/><rect x="580" y="507" width="12" height="12" fill="#62fe92"/><rect x="592" y="507" width="12" height="12" fill="#61fe8e"/><rect x="604" y="507" width="12" height="12" fill="#60fe8a"/><rect x="616" y="507" width="12" height="12" fill="#6ffe86"/><rect x="628" y="507" width="12" height="12" fill="#83fe81"/><rect x="640" y="507" width="12" height="12" fill="#95fe7c"/><rect x="652" y="507" width="12" height="12" fill="#a6fe76"/><rect x="664" y="507" width="12" height="12" fill="#b5fe6f"/><rect x="676" y="507" width="12" height="12" fill="#c3fd67"/><rect x="688" y="507" width="12" height="12" fill="#d1fd5e"/><rect x="700" y="507" width="12" height="12" fill="#defd54"/><rect x="712" y="507" width="12" height="12" fill="#ebfd46"/><rect x="724" y="507" width="12" height="12" fill="#f2f73c"/><rect x="736" y="507" width="12" height="12" fill="#f1e938"/><rect x="748" y="507" width="12" height="12" fill="#f0dd35"/><rect x="760" y="507" width="12" height="12" fill="#efd232"/><rect x="772" y="507" width="12" height="12" fill="#eec830"/><rect x="784" y="507" width="12" height="12" fill="#edbf2d"/><rect x="412" y="519" width="12" height="12" fill="#6afeba"/><rect x="424" y="519" width="12" height="12" fill="#69feb8"/><rect x="436" y="519" width="12" height="12" fill="#69feb6"/><rect x="448" y="519" width="12" height="12" fill="#69feb5"/><rect x="460" y="519" width="12" height="12" fill="#68feb3"/><rect x="472" y="519" width="12" height="12" fill="#68feb1"/><rect x="484" y="519" width="12" height="12" fill="#67feaf"/><rect x="496" y="519" width="12" height="12" fill="#67fead"/><rect x="508" y="519" width="12" height="12" fill="#66feab"/><rect x="520" y="519" width="12" height="12" fill="#66fea9"/><rect x="532" y="519" width="12" height="12" fill="#65fea6"/><rect x="544" y="519" width="12" height="12" fill="#65fea3"/><rect x="556" y="519" width="12" height="12" fill="#64fea1"/><rect x="568" y="519" width="12" height="12" fill="#64fe9e"/><rect x="580" y="519" width="12" height="12" fill="#63fe9a"/><rect x="592" y="519" width="12" height="12" fill="#62fe97"/><rect x="604" y="519" width="12" height="12" fill="#62fe93"/><rect x="616" y="519" width="12" height="12" fill="#77fe8f"/><rect x="628" y="519" width="12" height="12" fill="#8bfe8b"/><rect x="640" y="519" width="12" height="12" fill="#9dfe86"/><rect x="652" y="519" width="12" height="12" fill="#adfe80"/><rect x="664" y="519" width="12" height="12" fill="#bcfe7b"/><rect x="676" y="519" width="12" height="12" fill="#cbfe74"/><rect x="688" y="519" width="12" height="12" fill="#d9fd6c"/><rect x="700" y="519" width="12" height="12" fill="#e6fd63"/><rect x="712" y="519" width="12" height="12" fill="#f3fd58"/><rect x="724" y="519" width="12" height="12" fill="#f1ee46"/><rect x="736" y="519" width="12" height="12" fill="#f0e136"/><rect x="748" y="519" width="12" height="12" fill="#efd533"/><rect x="760" y="519" width="12" height="12" fill="#eecb30"/><rect x="772" y="519" width="12" height="12" fill="#eec12e"/><rect x="784" y="519" width="12" height="12" fill="#edb82b"/><rect x="796" y="519" width="12" height="12" fill="#ecb029"/><rect x="412" y="531" width="12" height="12" fill="#6bfebf"/><rect x="424" y="531" width="12" height="12" fill="#6bfebe"/><rect x="436" y="531" width="12" height="12" fill="#6afebd"/><rect x="448" y="531" width="12" height="12" fill="#6afebb"/><rect x="460" y="531" width="12" height="12" fill="#6afeb9"/><rect x="472" y="531" width="12" height="12" fill="#69feb8"/><rect x="484" y="531" width="12" height="12" fill="#69feb6"/><rect x="496" y="531" width="12" height="12" fill="#68feb4"/><rect x="508" y="531" width="12" height="12" fill="#68feb2"/><rect x="520" y="531" width="12" height="12" fill="#68feb0"/><rect x="532" y="531" width="12" height="12" fill="#67fead"/><rect x="544" y="531" width="12" height="12" fill="#67feab"/><rect x="556" y="531" width="12" height="12" fill="#66fea8"/><rect x="568" y="531" width="12" height="12" fill="#65fea6"/><rect x="580" y="531" width="12" height="12" fill="#65fea3"/><rect x="592" y="531" width="12" height="12" fill="#64fea0"/><rect x="604" y="531" width="12" height="12" fill="#68fe9c"/><rect x="616" y="531" width="12" height="12" fill="#7ffe98"/><rect x="628" y="531" width="12" height="12" fill="#93fe94"/><rect x="640" y="531" width="12" height="12" fill="#a5fe90"/><rect x="652" y="531" width="12" height="12" fill="#b5fe8b"/><rect x="664" y="531" width="12" height="12" fill="#c4fe86"/><rect x="676" y="531" width="12" height="12" fill="#d3fe80"/><rect x="688" y="531" width="12" height="12" fill="#e1fe79"/><rect x="700" y="531" width="12" height="12" fill="#effe72"/><rect x="712" y="531" width="12" height="12" fill="#f3f364"/><rect x="724" y="531" width="12" height="12" fill="#f1e555"/><rect x="736" y="531" width="12" height="12" fill="#f0d944"/><rect x="748" y="531" width="12" height="12" fill="#eecd31"/><rect x="760" y="531" width="12" height="12" fill="#eec32e"/><rect x="772" y="531" width="12" height="12" fill="#edba2c"/><rect x="784" y="531" width="12" height="12" fill="#ecb129"/><rect x="796" y="531" width="12" height="12" fill="#eca927"/><rect x="808" y="531" width="12" height="12" fill="#eba225"/><rect x="412" y="543" width="12" height="12" fill="#6cfec6"/><rect x="424" y="543" width="12" height="12" fill="#6cfec4"/><rect x="436" y="543" width="12" height="12" fill="#6cfec3"/><rect x="448" y="543" width="12" height="12" fill="#6cfec1"/><rect x="460" y="543" width="12" height="12" fill="#6bfec0"/><rect x="472" y="543" width="12" height="12" fill="#6bfebe"/><rect x="484" y="543" width="12" height="12" fill="#6afebd"/><rect x="496" y="543" width="12" height="12" fill="#6afebb"/><rect x="508" y="543" width="12" height="12" fill="#6afeb9"/><rect x="520" y="543" width="12" height="12" fill="#69feb7"/><rect x="532" y="543" width="12" height="12" fill="#69feb5"/><rect x="544" y="543" width="12" height="12" fill="#68feb3"/><rect x="556" y="543" width="12" height="12" fill="#68feb1"/><rect x="568" y="543" width="12" height="12" fill="#67feae"/><rect x="580" y="543" width="12" height="12" fill="#67feab"/><rect x="592" y="543" width="12" height="12" fill="#66fea8"/><rect x="604" y="543" width="12" height="12" fill="#71fea5"/><rect x="616" y="543" width="12" height="12" fill="#88fea2"/><rect x="628" y="543" width="12" height="12" fill="#9bfe9e"/><rect x="640" y="543" width="12" height="12" fill="#adfe9a"/><rect x="652" y="543" width="12" height="12" fill="#bdfe96"/><rect x="664" y="543" width="12" height="12" fill="#cdfe91"/><rect x="676" y="543" width="12" height="12" fill="#dcfe8c"/><rect x="688" y="543" width="12" height="12" fill="#eafe86"/><rect x="700" y="543" width="12" height="12" fill="#f4f97d"/><rect x="712" y="543" width="12" height="12" fill="#f2ea6e"/><rect x="724" y="543" width="12" height="12" fill="#f1dc60"/><rect x="736" y="543" width="12" height="12" fill="#efd052"/><rect x="748" y="543" width="12" height="12" fill="#eec543"/><rect x="760" y="543" width="12" height="12" fill="#edbc32"/><rect x="772" y="543" width="12" height="12" fill="#ecb32a"/><rect x="784" y="543" width="12" height="12" fill="#ecaa28"/><rect x="796" y="543" width="12" height="12" fill="#eba226"/><rect x="808" y="543" width="12" height="12" fill="#eb9b24"/><rect x="820" y="543" width="12" height="12" fill="#eb9422"/><rect x="412" y="555" width="12" height="12" fill="#6efecc"/><rect x="424" y="555" width="12" height="12" fill="#6efecb"/><rect x="436" y="555" width="12" height="12" fill="#6dfec9"/><rect x="448" y="555" width="12" height="12" fill="#6dfec8"/><rect x="460" y="555" width="12" height="12" fill="#6dfec7"/><rect x="472" y="555" width="12" height="12" fill="#6cfec5"/><rect x="484" y="555" width="12" height="12" fill="#6cfec4"/><rect x="496" y="555" width="12" height="12" fill="#6cfec2"/><rect x="508" y="555" width="12" height="12" fill="#6bfec1"/><rect x="520" y="555" width="12" height="12" fill="#6bfebf"/><rect x="532" y="555" width="12" height="12" fill="#6afebd"/><rect x="544" y="555" width="12" height="12" fill="#6afebb"/><rect x="556" y="555" width="12" height="12" fill="#6afeb9"/><rect x="568" y="555" width="12" height="12" fill="#69feb6"/><rect x="580" y="555" width="12" height="12" fill="#68feb4"/><rect x="592" y="555" width="12" height="12" fill="#68feb1"/><rect x="604" y="555" width="12" height="12" fill="#7afeaf"/><rect x="616" y="555" width="12" height="12" fill="#90feac"/><rect x="628" y="555" width="12" height="12" fill="#a3fea8"/><rect x="640" y="555" width="12" height="12" fill="#b5fea5"/><rect x="652" y="555" width="12" height="12" fill="#c6fea1"/><rect x="664" y="555" width="12" height="12" fill="#d5fe9d"/><rect x="676" y="555" width="12" height="12" fill="#e5fe98"/><rect x="688" y="555" width="12" height="12" fill="#f4fe93"/><rect x="700" y="555" width="12" height="12" fill="#f4ef85"/><rect x="712" y="555" width="12" height="12" fill="#f2e177"/><rect x="724" y="555" width="12" height="12" fill="#f0d46a"/><rect x="736" y="555" width="12" height="12" fill="#efc85d"/><rect x="748" y="555" width="12" height="12" fill="#eebe50"/><rect x="760" y="555" width="12" height="12" fill="#edb442"/><rect x="772" y="555" width="12" height="12" fill="#ecab32"/><rect x="784" y="555" width="12" height="12" fill="#eca326"/><rect x="796" y="555" width="12" height="12" fill="#eb9b24"/><rect x="808" y="555" width="12" height="12" fill="#eb9422"/><rect x="820" y="555" width="12" height="12" fill="#ea8d20"/><rect x="832" y="555" width="12" height="12" fill="#ea871e"/><rect x="412" y="567" width="12" height="12" fill="#70fed2"/><rect x="424" y="567" width="12" height="12" fill="#6ffed1"/><rect x="436" y="567" width="12" height="12" fill="#6ffed0"/><rect x="448" y="567" width="12" height="12" fill="#6ffecf"/><rect x="460" y="567" width="12" height="12" fill="#6efece"/><rect x="472" y="567" width="12" height="12" fill="#6efecc"/><rect x="484" y="567" width="12" height="12" fill="#6efecb"/><rect x="496" y="567" width="12" height="12" fill="#6dfeca"/><rect x="508" y="567" width="12" height="12" fill="#6dfec8"/><rect x="520" y="567" width="12" height="12" fill="#6dfec7"/><rect x="532" y="567" width="12" height="12" fill="#6cfec5"/><rect x="544" y="567" width="12" height="12" fill="#6cfec3"/><rect x="556" y="567" width="12" height="12" fill="#6bfec1"/><rect x="568" y="567" width="12" height="12" fill="#6bfebf"/><rect x="580" y="567" width="12" height="12" fill="#6bfebd"/><rect x="592" y="567" width="12" height="12" fill="#6afebb"/><rect x="604" y="567" width="12" height="12" fill="#83feb8"/><rect x="616" y="567" width="12" height="12" fill="#99feb6"/><rect x="628" y="567" width="12" height="12" fill="#acfeb3"/><rect x="640" y="567" width="12" height="12" fill="#befeb0"/><rect x="652" y="567" width="12" height="12" fill="#cffeac"/><rect x="664" y="567" width="12" height="12" fill="#dffea9"/><rect x="676" y="567" width="12" height="12" fill="#eefea4"/><rect x="688" y="567" width="12" height="12" fill="#f6f69b"/><rect x="700" y="567" width="12" height="12" fill="#f3e58c"/><rect x="712" y="567" width="12" height="12" fill="#f2d77e"/><rect x="724" y="567" width="12" height="12" fill="#f0cb72"/><rect x="736" y="567" width="12" height="12" fill="#efc066"/><rect x="748" y="567" width="12" height="12" fill="#eeb65a"/><rect x="760" y="567" width="12" height="12" fill="#edac4e"/><rect x="772" y="567" width="12" height="12" fill="#eca441"/><rect x="784" y="567" width="12" height="12" fill="#eb9c32"/><rect x="796" y="567" width="12" height="12" fill="#eb9422"/><rect x="808" y="567" width="12" height="12" fill="#ea8d20"/><rect x="820" y="567" width="12" height="12" fill="#ea861e"/><rect x="832" y="567" width="12" height="12" fill="#ea7f1d"/><rect x="844" y="567" width="12" height="12" fill="#e9791b"/><rect x="412" y="579" width="12" height="12" fill="#71fed9"/><rect x="424" y="579" width="12" height="12" fill="#71fed8"/><rect x="436" y="579" width="12" height="12" fill="#71fed7"/><rect x="448" y="579" width="12" height="12" fill="#71fed6"/><rect x="460" y="579" width="12" height="12" fill="#70fed5"/><rect x="472" y="579" width="12" height="12" fill="#70fed4"/><rect x="484" y="579" width="12" height="12" fill="#70fed3"/><rect x="496" y="579" width="12" height="12" fill="#6ffed1"/><rect x="508" y="579" width="12" height="12" fill="#6ffed0"/><rect x="520" y="579" width="12" height="12" fill="#6ffecf"/><rect x="532" y="579" width="12" height="12" fill="#6efecd"/><rect x="544" y="579" width="12" height="12" fill="#6efecc"/><rect x="556" y="579" width="12" height="12" fill="#6efeca"/><rect x="568" y="579" width="12" height="12" fill="#6dfec8"/><rect x="580" y="579" width="12" height="12" fill="#6dfec6"/><rect x="592" y="579" width="12" height="12" fill="#74fec4"/><rect x="604" y="579" width="12" height="12" fill="#8dfec2"/><rect x="616" y="579" width="12" height="12" fill="#a2fec0"/><rect x="628" y="579" width="12" height="12" fill="#b5febe"/><rect x="640" y="579" width="12" height="12" fill="#c7febb"/><rect x="652" y="579" width="12" height="12" fill="#d8feb8"/><rect x="664" y="579" width="12" height="12" fill="#e9feb5"/><rect x="676" y="579" width="12" height="12" fill="#f8fdb0"/><rect x="688" y="579" width="12" height="12" fill="#f5eba0"/><rect x="700" y="579" width="12" height="12" fill="#f3dc92"/><rect x="712" y="579" width="12" height="12" fill="#f1ce85"/><rect x="724" y="579" width="12" height="12" fill="#f0c279"/><rect x="736" y="579" width="12" height="12" fill="#efb76d"/><rect x="748" y="579" width="12" height="12" fill="#eead62"/><rect x="760" y="579" width="12" height="12" fill="#eda457"/><rect x="772" y="579" width="12" height="12" fill="#ec9c4c"/><rect x="784" y="579" width="12" height="12" fill="#eb9440"/><rect x="796" y="579" width="12" height="12" fill="#eb8c33"/><rect x="808" y="579" width="12" height="12" fill="#ea851f"/><rect x="820" y="579" width="12" height="12" fill="#ea7e1c"/><rect x="832" y="579" width="12" height="12" fill="#e9781b"/><rect x="844" y="579" width="12" height="12" fill="#e97119"/><rect x="856" y="579" width="12" height="12" fill="#e96b18"/><rect x="412" y="591" width="12" height="12" fill="#73ffdf"/><rect x="424" y="591" width="12" height="12" fill="#73ffdf"/><rect x="436" y="591" width="12" height="12" fill="#73ffde"/><rect x="448" y="591" width="12" height="12" fill="#72ffdd"/><rect x="460" y="591" width="12" height="12" fill="#72ffdc"/><rect x="472" y="591" width="12" height="12" fill="#72fedb"/><rect x="484" y="591" width="12" height="12" fill="#72feda"/><rect x="496" y="591" width="12" height="12" fill="#71fed9"/><rect x="508" y="591" width="12" height="12" fill="#71fed8"/><rect x="520" y="591" width="12" height="12" fill="#71fed7"/><rect x="532" y="591" width="12" height="12" fill="#71fed6"/><rect x="544" y="591" width="12" height="12" fill="#70fed5"/><rect x="556" y="591" width="12" height="12" fill="#70fed3"/><rect x="568" y="591" width="12" height="12" fill="#70fed2"/><rect x="580" y="591" width="12" height="12" fill="#6ffed0"/><rect x="592" y="591" width="12" height="12" fill="#7efecf"/><rect x="604" y="591" width="12" height="12" fill="#96fecd"/><rect x="616" y="591" width="12" height="12" fill="#abfecb"/><rect x="628" y="591" width="12" height="12" fill="#bffec9"/><rect x="640" y="591" width="12" height="12" fill="#d1fec7"/><rect x="652" y="591" width="12" height="12" fill="#e2fec4"/><rect x="664" y="591" width="12" height="12" fill="#f3fec1"/><rect x="676" y="591" width="12" height="12" fill="#f7f1b5"/><rect x="688" y="591" width="12" height="12" fill="#f4e0a5"/><rect x="700" y="591" width="12" height="12" fill="#f2d297"/><rect x="712" y="591" width="12" height="12" fill="#f1c58b"/><rect x="724" y="591" width="12" height="12" fill="#efb97f"/><rect x="736" y="591" width="12" height="12" fill="#eeaf74"/><rect x="748" y="591" width="12" height="12" fill="#eda56a"/><rect x="760" y="591" width="12" height="12" fill="#ec9c60"/><rect x="772" y="591" width="12" height="12" fill="#ec9455"/><rect x="784" y="591" width="12" height="12" fill="#eb8c4b"/><rect x="796" y="591" width="12" height="12" fill="#ea8540"/><rect x="808" y="591" width="12" height="12" fill="#ea7d33"/><rect x="820" y="591" width="12" height="12" fill="#e97622"/><rect x="832" y="591" width="12" height="12" fill="#e97019"/><rect x="844" y="591" width="12" height="12" fill="#e96917"/><rect x="856" y="591" width="12" height="12" fill="#e96316"/><rect x="868" y="591" width="12" height="12" fill="#e85c14"/><rect x="424" y="603" width="12" height="12" fill="#75ffe6"/><rect x="436" y="603" width="12" height="12" fill="#75ffe5"/><rect x="448" y="603" width="12" height="12" fill="#74ffe5"/><rect x="460" y="603" width="12" height="12" fill="#74ffe4"/><rect x="472" y="603" width="12" height="12" fill="#74ffe3"/><rect x="484" y="603" width="12" height="12" fill="#74ffe2"/><rect x="496" y="603" width="12" height="12" fill="#74ffe2"/><rect x="508" y="603" width="12" height="12" fill="#73ffe1"/><rect x="520" y="603" width="12" height="12" fill="#73ffe0"/><rect x="532" y="603" width="12" height="12" fill="#73ffdf"/><rect x="544" y="603" width="12" height="12" fill="#73ffde"/><rect x="556" y="603" width="12" height="12" fill="#72ffdd"/><rect x="568" y="603" width="12" height="12" fill="#72fedc"/><rect x="580" y="603" width="12" height="12" fill="#72fedb"/><rect x="592" y="603" width="12" height="12" fill="#88fed9"/><rect x="604" y="603" width="12" height="12" fill="#a0fed8"/><rect x="616" y="603" width="12" height="12" fill="#b5fed6"/><rect x="628" y="603" width="12" height="12" fill="#c9fed5"/><rect x="640" y="603" width="12" height="12" fill="#dbfed3"/><rect x="652" y="603" width="12" height="12" fill="#edfed1"/><rect x="664" y="603" width="12" height="12" fill="#f9f9ca"/><rect x="676" y="603" width="12" height="12" fill="#f6e6b9"/><rect x="688" y="603" width="12" height="12" fill="#f4d6a9"/><rect x="700" y="603" width="12" height="12" fill="#f2c89c"/><rect x="712" y="603" width="12" height="12" fill="#f1bb90"/><rect x="724" y="603" width="12" height="12" fill="#efb085"/><rect x="736" y="603" width="12" height="12" fill="#eea67a"/><rect x="748" y="603" width="12" height="12" fill="#ed9d70"/><rect x="760" y="603" width="12" height="12" fill="#ec9467"/><rect x="772" y="603" width="12" height="12" fill="#ec8c5d"/><rect x="784" y="603" width="12" height="12" fill="#eb8454"/><rect x="796" y="603" width="12" height="12" fill="#ea7c4a"/><rect x="808" y="603" width="12" height="12" fill="#ea753f"/><rect x="820" y="603" width="12" height="12" fill="#e96e33"/><rect x="832" y="603" width="12" height="12" fill="#e96724"/><rect x="844" y="603" width="12" height="12" fill="#e96015"/><rect x="856" y="603" width="12" height="12" fill="#e85913"/><rect x="868" y="603" width="12" height="12" fill="#e85312"/><rect x="880" y="603" width="12" height="12" fill="#e84c10"/><rect x="424" y="615" width="12" height="12" fill="#77ffed"/><rect x="436" y="615" width="12" height="12" fill="#77ffed"/><rect x="448" y="615" width="12" height="12" fill="#76ffec"/><rect x="460" y="615" width="12" height="12" fill="#76ffec"/><rect x="472" y="615" width="12" height="12" fill="#76ffec"/><rect x="484" y="615" width="12" height="12" fill="#76ffeb"/><rect x="496" y="615" width="12" height="12" fill="#76ffea"/><rect x="508" y="615" width="12" height="12" fill="#76ffea"/><rect x="520" y="615" width="12" height="12" fill="#76ffe9"/><rect x="532" y="615" width="12" height="12" fill="#75ffe9"/><rect x="544" y="615" width="12" height="12" fill="#75ffe8"/><rect x="556" y="615" width="12" height="12" fill="#75ffe7"/><rect x="568" y="615" width="12" height="12" fill="#75ffe6"/><rect x="580" y="615" width="12" height="12" fill="#78ffe5"/><rect x="592" y="615" width="12" height="12" fill="#93ffe4"/><rect x="604" y="615" width="12" height="12" fill="#aaffe3"/><rect x="616" y="615" width="12" height="12" fill="#c0ffe2"/><rect x="628" y="615" width="12" height="12" fill="#d4ffe1"/><rect x="640" y="615" width="12" height="12" fill="#e7ffe0"/><rect x="652" y="615" width="12" height="12" fill="#f9ffde"/><rect x="664" y="615" width="12" height="12" fill="#f8eccd"/><rect x="676" y="615" width="12" height="12" fill="#f6dabc"/><rect x="688" y="615" width="12" height="12" fill="#f3cbae"/><rect x="700" y="615" width="12" height="12" fill="#f2bea1"/><rect x="712" y="615" width="12" height="12" fill="#f0b295"/><rect x="724" y="615" width="12" height="12" fill="#efa78a"/><rect x="736" y="615" width="12" height="12" fill="#ee9d80"/><rect x="748" y="615" width="12" height="12" fill="#ed9476"/><rect x="760" y="615" width="12" height="12" fill="#ec8b6d"/><rect x="772" y="615" width="12" height="12" fill="#eb8364"/><rect x="784" y="615" width="12" height="12" fill="#eb7b5b"/><rect x="796" y="615" width="12" height="12" fill="#ea7452"/><rect x="808" y="615" width="12" height="12" fill="#ea6c49"/><rect x="820" y="615" width="12" height="12" fill="#e9653f"/><rect x="832" y="615" width="12" height="12" fill="#e95e33"/><rect x="844" y="615" width="12" height="12" fill="#e85726"/><rect x="856" y="615" width="12" height="12" fill="#e84f11"/><rect x="868" y="615" width="12" height="12" fill="#e84810"/><rect x="880" y="615" width="12" height="12" fill="#e8400e"/><rect x="892" y="615" width="12" height="12" fill="#e8370c"/><rect x="424" y="627" width="12" height="12" fill="#79fff5"/><rect x="436" y="627" width="12" height="12" fill="#79fff5"/><rect x="448" y="627" width="12" height="12" fill="#79fff5"/><rect x="460" y="627" width="12" height="12" fill="#79fff4"/><rect x="472" y="627" width="12" height="12" fill="#79fff4"/><rect x="484" y="627" width="12" height="12" fill="#79fff4"/><rect x="496" y="627" width="12" height="12" fill="#78fff4"/><rect x="508" y="627" width="12" height="12" fill="#78fff3"/><rect x="520" y="627" width="12" height="12" fill="#78fff3"/><rect x="532" y="627" width="12" height="12" fill="#78fff3"/><rect x="544" y="627" width="12" height="12" fill="#78fff2"/><rect x="556" y="627" width="12" height="12" fill="#78fff2"/><rect x="568" y="627" width="12" height="12" fill="#78fff1"/><rect x="580" y="627" width="12" height="12" fill="#83fff1"/><rect x="592" y="627" width="12" height="12" fill="#9efff0"/><rect x="604" y="627" width="12" height="12" fill="#b5fff0"/><rect x="616" y="627" width="12" height="12" fill="#cbffef"/><rect x="628" y="627" width="12" height="12" fill="#dfffef"/><rect x="640" y="627" width="12" height="12" fill="#f3ffee"/><rect x="652" y="627" width="12" height="12" fill="#fbf4e3"/><rect x="664" y="627" width="12" height="12" fill="#f8e0d0"/><rect x="676" y="627" width="12" height="12" fill="#f5cfbf"/><rect x="688" y="627" width="12" height="12" fill="#f3c1b1"/><rect x="700" y="627" width="12" height="12" fill="#f1b4a5"/><rect x="712" y="627" width="12" height="12" fill="#f0a899"/><rect x="724" y="627" width="12" height="12" fill="#ef9e8f"/><rect x="736" y="627" width="12" height="12" fill="#ee9485"/><rect x="748" y="627" width="12" height="12" fill="#ed8b7c"/><rect x="760" y="627" width="12" height="12" fill="#ec8273"/><rect x="772" y="627" width="12" height="12" fill="#eb7a6a"/><rect x="784" y="627" width="12" height="12" fill="#eb7262"/><rect x="796" y="627" width="12" height="12" fill="#ea6a59"/><rect x="808" y="627" width="12" height="12" fill="#ea6351"/><rect x="820" y="627" width="12" height="12" fill="#e95b48"/><rect x="832" y="627" width="12" height="12" fill="#e9533e"/><rect x="844" y="627" width="12" height="12" fill="#e84b34"/><rect x="856" y="627" width="12" height="12" fill="#e84327"/><rect x="868" y="627" width="12" height="12" fill="#e83a11"/><rect x="880" y="627" width="12" height="12" fill="#e7300b"/><rect x="892" y="627" width="12" height="12" fill="#e72409"/><rect x="904" y="627" width="12" height="12" fill="#e71007"/><rect x="424" y="639" width="12" height="12" fill="#7bfffd"/><rect x="436" y="639" width="12" height="12" fill="#7bfffd"/><rect x="448" y="639" width="12" height="12" fill="#7bfffd"/><rect x="460" y="639" width="12" height="12" fill="#7bfffd"/><rect x="472" y="639" width="12" height="12" fill="#7bfffd"/><rect x="484" y="639" width="12" height="12" fill="#7bfffd"/><rect x="496" y="639" width="12" height="12" fill="#7bfffd"/><rect x="508" y="639" width="12" height="12" fill="#7bfffd"/><rect x="520" y="639" width="12" height="12" fill="#7bfffd"/><rect x="532" y="639" width="12" height="12" fill="#7bfffd"/><rect x="544" y="639" width="12" height="12" fill="#7bfffd"/><rect x="556" y="639" width="12" height="12" fill="#7bfffd"/><rect x="568" y="639" width="12" height="12" fill="#7bfffd"/><rect x="580" y="639" width="12" height="12" fill="#8ffffd"/><rect x="592" y="639" width="12" height="12" fill="#a9fffd"/><rect x="604" y="639" width="12" height="12" fill="#c1fffd"/><rect x="616" y="639" width="12" height="12" fill="#d7fffd"/><rect x="628" y="639" width="12" height="12" fill="#ecfffd"/><rect x="640" y="639" width="12" height="12" fill="#fefdfb"/><rect x="652" y="639" width="12" height="12" fill="#fae6e5"/><rect x="664" y="639" width="12" height="12" fill="#f7d4d2"/><rect x="676" y="639" width="12" height="12" fill="#f5c4c2"/><rect x="688" y="639" width="12" height="12" fill="#f3b6b5"/><rect x="700" y="639" width="12" height="12" fill="#f1a9a8"/><rect x="712" y="639" width="12" height="12" fill="#f09e9d"/><rect x="724" y="639" width="12" height="12" fill="#ee9493"/><rect x="736" y="639" width="12" height="12" fill="#ed8a89"/><rect x="748" y="639" width="12" height="12" fill="#ed8180"/><rect x="760" y="639" width="12" height="12" fill="#ec7978"/><rect x="772" y="639" width="12" height="12" fill="#eb7070"/><rect x="784" y="639" width="12" height="12" fill="#eb6868"/><rect x="796" y="639" width="12" height="12" fill="#ea6060"/><rect x="808" y="639" width="12" height="12" fill="#ea5858"/><rect x="820" y="639" width="12" height="12" fill="#e9504f"/><rect x="832" y="639" width="12" height="12" fill="#e94747"/><rect x="844" y="639" width="12" height="12" fill="#e83e3e"/><rect x="856" y="639" width="12" height="12" fill="#e83434"/><rect x="868" y="639" width="12" height="12" fill="#e82828"/><rect x="880" y="639" width="12" height="12" fill="#e71616"/><rect x="892" y="639" width="12" height="12" fill="#e70007"/><rect x="904" y="639" width="12" height="12" fill="#e70007"/><rect x="916" y="639" width="12" height="12" fill="#e70007"/><rect x="424" y="651" width="12" height="12" fill="#7af8fe"/><rect x="436" y="651" width="12" height="12" fill="#7af8fe"/><rect x="448" y="651" width="12" height="12" fill="#7af7fe"/><rect x="460" y="651" width="12" height="12" fill="#7af7fe"/><rect x="472" y="651" width="12" height="12" fill="#7af7fe"/><rect x="484" y="651" width="12" height="12" fill="#7af7fe"/><rect x="496" y="651" width="12" height="12" fill="#79f6fe"/><rect x="508" y="651" width="12" height="12" fill="#79f6fe"/><rect x="520" y="651" width="12" height="12" fill="#79f6fe"/><rect x="532" y="651" width="12" height="12" fill="#79f5fe"/><rect x="544" y="651" width="12" height="12" fill="#79f5fe"/><rect x="556" y="651" width="12" height="12" fill="#79f4fe"/><rect x="568" y="651" width="12" height="12" fill="#79f4fe"/><rect x="580" y="651" width="12" height="12" fill="#94f4fe"/><rect x="592" y="651" width="12" height="12" fill="#adf3fe"/><rect x="604" y="651" width="12" height="12" fill="#c3f2fe"/><rect x="616" y="651" width="12" height="12" fill="#d8f2fe"/><rect x="628" y="651" width="12" height="12" fill="#ecf1fe"/><rect x="640" y="651" width="12" height="12" fill="#fdeefc"/><rect x="652" y="651" width="12" height="12" fill="#f9d9e6"/><rect x="664" y="651" width="12" height="12" fill="#f6c7d4"/><rect x="676" y="651" width="12" height="12" fill="#f4b8c5"/><rect x="688" y="651" width="12" height="12" fill="#f2abb8"/><rect x="700" y="651" width="12" height="12" fill="#f19fac"/><rect x="712" y="651" width="12" height="12" fill="#ef94a1"/><rect x="724" y="651" width="12" height="12" fill="#ee8a97"/><rect x="736" y="651" width="12" height="12" fill="#ed808e"/><rect x="748" y="651" width="12" height="12" fill="#ec7785"/><rect x="760" y="651" width="12" height="12" fill="#ec6e7d"/><rect x="772" y="651" width="12" height="12" fill="#eb6675"/><rect x="784" y="651" width="12" height="12" fill="#ea5d6d"/><rect x="796" y="651" width="12" height="12" fill="#ea5565"/><rect x="808" y="651" width="12" height="12" fill="#e94c5e"/><rect x="820" y="651" width="12" height="12" fill="#e94256"/><rect x="832" y="651" width="12" height="12" fill="#e9384e"/><rect x="844" y="651" width="12" height="12" fill="#e82c46"/><rect x="856" y="651" width="12" height="12" fill="#e81c3e"/><rect x="868" y="651" width="12" height="12" fill="#e80234"/><rect x="880" y="651" width="12" height="12" fill="#e70129"/><rect x="892" y="651" width="12" height="12" fill="#e7001a"/><rect x="904" y="651" width="12" height="12" fill="#e70007"/><rect x="916" y="651" width="12" height="12" fill="#e70007"/><rect x="928" y="651" width="12" height="12" fill="#e70007"/><rect x="424" y="663" width="12" height="12" fill="#78effe"/><rect x="436" y="663" width="12" height="12" fill="#78effe"/><rect x="448" y="663" width="12" height="12" fill="#78eefe"/><rect x="460" y="663" width="12" height="12" fill="#77eefe"/><rect x="472" y="663" width="12" height="12" fill="#77edfe"/><rect x="484" y="663" width="12" height="12" fill="#77edfe"/><rect x="496" y="663" width="12" height="12" fill="#77ecfe"/><rect x="508" y="663" width="12" height="12" fill="#77ecfe"/><rect x="520" y="663" width="12" height="12" fill="#77ebfe"/><rect x="532" y="663" width="12" height="12" fill="#77eafe"/><rect x="544" y="663" width="12" height="12" fill="#76e9fe"/><rect x="556" y="663" width="12" height="12" fill="#76e9fe"/><rect x="568" y="663" width="12" height="12" fill="#7de8fe"/><rect x="580" y="663" width="12" height="12" fill="#98e7fe"/><rect x="592" y="663" width="12" height="12" fill="#afe6fe"/><rect x="604" y="663" width="12" height="12" fill="#c4e5fe"/><rect x="616" y="663" width="12" height="12" fill="#d8e3fe"/><rect x="628" y="663" width="12" height="12" fill="#ebe2fe"/><rect x="640" y="663" width="12" height="12" fill="#fcdffc"/><rect x="652" y="663" width="12" height="12" fill="#f8cce8"/><rect x="664" y="663" width="12" height="12" fill="#f6bbd6"/><rect x="676" y="663" width="12" height="12" fill="#f4acc8"/><rect x="688" y="663" width="12" height="12" fill="#f2a0bb"/><rect x="700" y="663" width="12" height="12" fill="#f094af"/><rect x="712" y="663" width="12" height="12" fill="#ef89a4"/><rect x="724" y="663" width="12" height="12" fill="#ee7f9b"/><rect x="736" y="663" width="12" height="12" fill="#ed7592"/><rect x="748" y="663" width="12" height="12" fill="#ec6c89"/><rect x="760" y="663" width="12" height="12" fill="#ec6381"/><rect x="772" y="663" width="12" height="12" fill="#eb5a79"/><rect x="784" y="663" width="12" height="12" fill="#ea5172"/><rect x="796" y="663" width="12" height="12" fill="#ea476a"/><rect x="808" y="663" width="12" height="12" fill="#e93d63"/><rect x="820" y="663" width="12" height="12" fill="#e9315c"/><rect x="832" y="663" width="12" height="12" fill="#e92155"/><rect x="844" y="663" width="12" height="12" fill="#e8044d"/><rect x="856" y="663" width="12" height="12" fill="#e80346"/><rect x="868" y="663" width="12" height="12" fill="#e8023e"/><rect x="880" y="663" width="12" height="12" fill="#e80235"/><rect x="892" y="663" width="12" height="12" fill="#e7012b"/><rect x="904" y="663" width="12" height="12" fill="#e7011e"/><rect x="916" y="663" width="12" height="12" fill="#e70007"/><rect x="928" y="663" width="12" height="12" fill="#e70007"/><rect x="940" y="663" width="12" height="12" fill="#e70007"/><rect x="436" y="675" width="12" height="12" fill="#76e6fe"/><rect x="448" y="675" width="12" height="12" fill="#76e6fe"/><rect x="460" y="675" width="12" height="12" fill="#75e5fe"/><rect x="472" y="675" width="12" height="12" fill="#75e4fe"/><rect x="484" y="675" width="12" height="12" fill="#75e3fe"/><rect x="496" y="675" width="12" height="12" fill="#75e2fe"/><rect x="508" y="675" width="12" height="12" fill="#75e1fd"/><rect x="520" y="675" width="12" height="12" fill="#74e0fd"/><rect x="532" y="675" width="12" height="12" fill="#74dffd"/><rect x="544" y="675" width="12" height="12" fill="#74defd"/><rect x="556" y="675" width="12" height="12" fill="#74ddfd"/><rect x="568" y="675" width="12" height="12" fill="#82dcfd"/><rect x="580" y="675" width="12" height="12" fill="#9bdafd"/><rect x="592" y="675" width="12" height="12" fill="#b1d9fd"/><rect x="604" y="675" width="12" height="12" fill="#c5d7fd"/><rect x="616" y="675" width="12" height="12" fill="#d7d5fd"/><rect x="628" y="675" width="12" height="12" fill="#ead3fd"/><rect x="640" y="675" width="12" height="12" fill="#fbd1fd"/><rect x="652" y="675" width="12" height="12" fill="#f8bee9"/><rect x="664" y="675" width="12" height="12" fill="#f5aed8"/><rect x="676" y="675" width="12" height="12" fill="#f3a0ca"/><rect x="688" y="675" width="12" height="12" fill="#f194bd"/><rect x="700" y="675" width="12" height="12" fill="#f088b2"/><rect x="712" y="675" width="12" height="12" fill="#ef7ea8"/><rect x="724" y="675" width="12" height="12" fill="#ee739e"/><rect x="736" y="675" width="12" height="12" fill="#ed6995"/><rect x="748" y="675" width="12" height="12" fill="#ec608d"/><rect x="760" y="675" width="12" height="12" fill="#eb5685"/><rect x="772" y="675" width="12" height="12" fill="#eb4c7d"/><rect x="784" y="675" width="12" height="12" fill="#ea4176"/><rect x="796" y="675" width="12" height="12" fill="#ea356f"/><rect x="808" y="675" width="12" height="12" fill="#e92768"/><rect x="820" y="675" width="12" height="12" fill="#e90a61"/><rect x="832" y="675" width="12" height="12" fill="#e9055b"/><rect x="844" y="675" width="12" height="12" fill="#e80454"/><rect x="856" y="675" width="12" height="12" fill="#e8044d"/><rect x="868" y="675" width="12" height="12" fill="#e80346"/><rect x="880" y="675" width="12" height="12" fill="#e8023f"/><rect x="892" y="675" width="12" height="12" fill="#e80237"/><rect x="904" y="675" width="12" height="12" fill="#e7012d"/><rect x="916" y="675" width="12" height="12" fill="#e70122"/><rect x="928" y="675" width="12" height="12" fill="#e7000e"/><rect x="940" y="675" width="12" height="12" fill="#e70007"/><rect x="952" y="675" width="12" height="12" fill="#e70007"/><rect x="436" y="687" width="12" height="12" fill="#74defd"/><rect x="448" y="687" width="12" height="12" fill="#74ddfd"/><rect x="460" y="687" width="12" height="12" fill="#73dcfd"/><rect x="472" y="687" width="12" height="12" fill="#73dbfd"/><rect x="484" y="687" width="12" height="12" fill="#73dafd"/><rect x="496" y="687" width="12" height="12" fill="#73d9fd"/><rect x="508" y="687" width="12" height="12" fill="#72d7fd"/><rect x="520" y="687" width="12" height="12" fill="#72d6fd"/><rect x="532" y="687" width="12" height="12" fill="#72d5fd"/><rect x="544" y="687" width="12" height="12" fill="#72d3fd"/><rect x="556" y="687" width="12" height="12" fill="#71d1fd"/><rect x="568" y="687" width="12" height="12" fill="#86d0fd"/><rect x="580" y="687" width="12" height="12" fill="#9ecefd"/><rect x="592" y="687" width="12" height="12" fill="#b2ccfd"/><rect x="604" y="687" width="12" height="12" fill="#c5cafd"/><rect x="616" y="687" width="12" height="12" fill="#d7c7fd"/><rect x="628" y="687" width="12" height="12" fill="#e8c4fd"/><rect x="640" y="687" width="12" height="12" fill="#f9c2fd"/><rect x="652" y="687" width="12" height="12" fill="#f7b1ea"/><rect x="664" y="687" width="12" height="12" fill="#f5a1da"/><rect x="676" y="687" width="12" height="12" fill="#f394cc"/><rect x="688" y="687" width="12" height="12" fill="#f187c0"/><rect x="700" y="687" width="12" height="12" fill="#f07cb5"/><rect x="712" y="687" width="12" height="12" fill="#ef71ab"/><rect x="724" y="687" width="12" height="12" fill="#ee67a1"/><rect x="736" y="687" width="12" height="12" fill="#ed5c99"/><rect x="748" y="687" width="12" height="12" fill="#ec5290"/><rect x="760" y="687" width="12" height="12" fill="#eb4789"/><rect x="772" y="687" width="12" height="12" fill="#eb3a81"/><rect x="784" y="687" width="12" height="12" fill="#ea2c7a"/><rect x="796" y="687" width="12" height="12" fill="#ea1673"/><rect x="808" y="687" width="12" height="12" fill="#e9086d"/><rect x="820" y="687" width="12" height="12" fill="#e90766"/><rect x="832" y="687" width="12" height="12" fill="#e90660"/><rect x="844" y="687" width="12" height="12" fill="#e9055a"/><rect x="856" y="687" width="12" height="12" fill="#e80453"/><rect x="868" y="687" width="12" height="12" fill="#e8044d"/><rect x="880" y="687" width="12" height="12" fill="#e80346"/><rect x="892" y="687" width="12" height="12" fill="#e8023f"/><rect x="904" y="687" width="12" height="12" fill="#e80238"/><rect x="916" y="687" width="12" height="12" fill="#e7012f"/><rect x="928" y="687" width="12" height="12" fill="#e70125"/><rect x="940" y="687" width="12" height="12" fill="#e70015"/><rect x="952" y="687" width="12" height="12" fill="#e70007"/><rect x="964" y="687" width="12" height="12" fill="#e70007"/><rect x="436" y="699" width="12" height="12" fill="#72d5fd"/><rect x="448" y="699" width="12" height="12" fill="#72d4fd"/><rect x="460" y="699" width="12" height="12" fill="#72d3fd"/><rect x="472" y="699" width="12" height="12" fill="#71d2fd"/><rect x="484" y="699" width="12" height="12" fill="#71d0fd"/><rect x="496" y="699" width="12" height="12" fill="#71cffd"/><rect x="508" y="699" width="12" height="12" fill="#70cdfd"/><rect x="520" y="699" width="12" height="12" fill="#70ccfd"/><rect x="532" y="699" width="12" height="12" fill="#70cafd"/><rect x="544" y="699" width="12" height="12" fill="#6fc8fd"/><rect x="556" y="699" width="12" height="12" fill="#70c6fc"/><rect x="568" y="699" width="12" height="12" fill="#8bc4fc"/><rect x="580" y="699" width="12" height="12" fill="#a0c1fc"/><rect x="592" y="699" width="12" height="12" fill="#b4bffc"/><rect x="604" y="699" width="12" height="12" fill="#c6bcfc"/><rect x="616" y="699" width="12" height="12" fill="#d7b9fc"/><rect x="628" y="699" width="12" height="12" fill="#e7b6fc"/><rect x="640" y="699" width="12" height="12" fill="#f8b2fc"/><rect x="652" y="699" width="12" height="12" fill="#f6a2eb"/><rect x="664" y="699" width="12" height="12" fill="#f494dc"/><rect x="676" y="699" width="12" height="12" fill="#f287ce"/><rect x="688" y="699" width="12" height="12" fill="#f17ac2"/><rect x="700" y="699" width="12" height="12" fill="#ef6eb7"/><rect x="712" y="699" width="12" height="12" fill="#ee63ad"/><rect x="724" y="699" width="12" height="12" fill="#ed58a4"/><rect x="736" y="699" width="12" height="12" fill="#ec4c9c"/><rect x="748" y="699" width="12" height="12" fill="#ec4094"/><rect x="760" y="699" width="12" height="12" fill="#eb328c"/><rect x="772" y="699" width="12" height="12" fill="#ea1e85"/><rect x="784" y="699" width="12" height="12" fill="#ea0b7e"/><rect x="796" y="699" width="12" height="12" fill="#ea0a78"/><rect x="808" y="699" width="12" height="12" fill="#e90971"/><rect x="820" y="699" width="12" height="12" fill="#e9086b"/><rect x="832" y="699" width="12" height="12" fill="#e90765"/><rect x="844" y="699" width="12" height="12" fill="#e9065f"/><rect x="856" y="699" width="12" height="12" fill="#e90559"/><rect x="868" y="699" width="12" height="12" fill="#e80453"/><rect x="880" y="699" width="12" height="12" fill="#e8044d"/><rect x="892" y="699" width="12" height="12" fill="#e80346"/><rect x="904" y="699" width="12" height="12" fill="#e80340"/><rect x="916" y="699" width="12" height="12" fill="#e80239"/><rect x="928" y="699" width="12" height="12" fill="#e80130"/><rect x="940" y="699" width="12" height="12" fill="#e70127"/><rect x="964" y="699" width="12" height="12" fill="#e70007"/><rect x="436" y="711" width="12" height="12" fill="#70cdfd"/><rect x="448" y="711" width="12" height="12" fill="#70ccfd"/><rect x="460" y="711" width="12" height="12" fill="#70cafd"/><rect x="472" y="711" width="12" height="12" fill="#6fc9fd"/><rect x="484" y="711" width="12" height="12" fill="#6fc7fd"/><rect x="496" y="711" width="12" height="12" fill="#6fc5fc"/><rect x="508" y="711" width="12" height="12" fill="#6ec3fc"/><rect x="520" y="711" width="12" height="12" fill="#6ec1fc"/><rect x="532" y="711" width="12" height="12" fill="#6ebffc"/><rect x="544" y="711" width="12" height="12" fill="#6dbdfc"/><rect x="556" y="711" width="12" height="12" fill="#76bbfc"/><rect x="568" y="711" width="12" height="12" fill="#8eb8fc"/><rect x="580" y="711" width="12" height="12" fill="#a3b5fc"/><rect x="592" y="711" width="12" height="12" fill="#b5b2fc"/><rect x="604" y="711" width="12" height="12" fill="#c6affc"/><rect x="616" y="711" width="12" height="12" fill="#d7abfc"/><rect x="628" y="711" width="12" height="12" fill="#e7a7fc"/><rect x="640" y="711" width="12" height="12" fill="#f6a2fc"/><rect x="652" y="711" width="12" height="12" fill="#f694ec"/><rect x="664" y="711" width="12" height="12" fill="#f485dd"/><rect x="676" y="711" width="12" height="12" fill="#f278d0"/><rect x="688" y="711" width="12" height="12" fill="#f06bc4"/><rect x="700" y="711" width="12" height="12" fill="#ef5fba"/><rect x="712" y="711" width="12" height="12" fill="#ee53b0"/><rect x="724" y="711" width="12" height="12" fill="#ed46a7"/><rect x="736" y="711" width="12" height="12" fill="#ec379f"/><rect x="748" y="711" width="12" height="12" fill="#ec2597"/><rect x="760" y="711" width="12" height="12" fill="#eb0e8f"/><rect x="772" y="711" width="12" height="12" fill="#eb0d89"/><rect x="784" y="711" width="12" height="12" fill="#ea0b82"/><rect x="796" y="711" width="12" height="12" fill="#ea0a7c"/><rect x="808" y="711" width="12" height="12" fill="#ea0976"/><rect x="820" y="711" width="12" height="12" fill="#e90870"/><rect x="832" y="711" width="12" height="12" fill="#e9076a"/><rect x="844" y="711" width="12" height="12" fill="#e90764"/><rect x="856" y="711" width="12" height="12" fill="#e9065e"/><rect x="868" y="711" width="12" height="12" fill="#e80559"/><rect x="880" y="711" width="12" height="12" fill="#e80453"/><rect x="892" y="711" width="12" height="12" fill="#e8044d"/><rect x="904" y="711" width="12" height="12" fill="#e80347"/><rect x="916" y="711" width="12" height="12" fill="#e80340"/><rect x="928" y="711" width="12" height="12" fill="#e80239"/><rect x="964" y="711" width="12" height="12" fill="#e7011d"/><rect x="448" y="723" width="12" height="12" fill="#6ec3fc"/><rect x="460" y="723" width="12" height="12" fill="#6ec1fc"/><rect x="472" y="723" width="12" height="12" fill="#6ec0fc"/><rect x="484" y="723" width="12" height="12" fill="#6dbefc"/><rect x="496" y="723" width="12" height="12" fill="#6dbcfc"/><rect x="508" y="723" width="12" height="12" fill="#6cbafc"/><rect x="520" y="723" width="12" height="12" fill="#6cb7fc"/><rect x="532" y="723" width="12" height="12" fill="#6cb5fc"/><rect x="544" y="723" width="12" height="12" fill="#6bb2fc"/><rect x="556" y="723" width="12" height="12" fill="#7baffc"/><rect x="568" y="723" width="12" height="12" fill="#92acfc"/><rect x="580" y="723" width="12" height="12" fill="#a5a9fc"/><rect x="592" y="723" width="12" height="12" fill="#b6a5fc"/><rect x="604" y="723" width="12" height="12" fill="#c7a1fb"/><rect x="616" y="723" width="12" height="12" fill="#d79cfb"/><rect x="628" y="723" width="12" height="12" fill="#e697fb"/><rect x="640" y="723" width="12" height="12" fill="#f592fb"/><rect x="652" y="723" width="12" height="12" fill="#f584ed"/><rect x="664" y="723" width="12" height="12" fill="#f376df"/><rect x="676" y="723" width="12" height="12" fill="#f168d2"/><rect x="688" y="723" width="12" height="12" fill="#f05ac6"/><rect x="700" y="723" width="12" height="12" fill="#ef4dbc"/><rect x="712" y="723" width="12" height="12" fill="#ee3eb2"/><rect x="724" y="723" width="12" height="12" fill="#ed2caa"/><rect x="736" y="723" width="12" height="12" fill="#ec11a1"/><rect x="748" y="723" width="12" height="12" fill="#ec109a"/><rect x="760" y="723" width="12" height="12" fill="#eb0e93"/><rect x="772" y="723" width="12" height="12" fill="#eb0d8c"/><rect x="784" y="723" width="12" height="12" fill="#ea0c86"/><rect x="796" y="723" width="12" height="12" fill="#ea0b80"/><rect x="808" y="723" width="12" height="12" fill="#ea0a7a"/><rect x="820" y="723" width="12" height="12" fill="#ea0974"/><rect x="832" y="723" width="12" height="12" fill="#e9086e"/><rect x="844" y="723" width="12" height="12" fill="#e90769"/><rect x="856" y="723" width="12" height="12" fill="#e90663"/><rect x="868" y="723" width="12" height="12" fill="#e9065e"/><rect x="880" y="723" width="12" height="12" fill="#e80558"/><rect x="892" y="723" width="12" height="12" fill="#e80452"/><rect x="904" y="723" width="12" height="12" fill="#e8044d"/><rect x="448" y="735" width="12" height="12" fill="#6dbbfc"/><rect x="460" y="735" width="12" height="12" fill="#6cb9fc"/><rect x="472" y="735" width="12" height="12" fill="#6cb7fc"/><rect x="484" y="735" width="12" height="12" fill="#6bb4fc"/><rect x="496" y="735" width="12" height="12" fill="#6bb2fc"/><rect x="508" y="735" width="12" height="12" fill="#6bb0fc"/><rect x="520" y="735" width="12" height="12" fill="#6aadfc"/><rect x="532" y="735" width="12" height="12" fill="#6aaafc"/><rect x="544" y="735" width="12" height="12" fill="#69a7fc"/><rect x="556" y="735" width="12" height="12" fill="#80a3fb"/><rect x="568" y="735" width="12" height="12" fill="#94a0fb"/><rect x="580" y="735" width="12" height="12" fill="#a79cfb"/><rect x="592" y="735" width="12" height="12" fill="#b897fb"/><rect x="604" y="735" width="12" height="12" fill="#c793fb"/><rect x="616" y="735" width="12" height="12" fill="#d68dfb"/><rect x="628" y="735" width="12" height="12" fill="#e587fb"/><rect x="640" y="735" width="12" height="12" fill="#f380fb"/><rect x="652" y="735" width="12" height="12" fill="#f573ee"/><rect x="664" y="735" width="12" height="12" fill="#f364e0"/><rect x="676" y="735" width="12" height="12" fill="#f155d3"/><rect x="688" y="735" width="12" height="12" fill="#f045c8"/><rect x="700" y="735" width="12" height="12" fill="#ef33be"/><rect x="712" y="735" width="12" height="12" fill="#ee14b5"/><rect x="724" y="735" width="12" height="12" fill="#ed13ac"/><rect x="736" y="735" width="12" height="12" fill="#ec12a4"/><rect x="748" y="735" width="12" height="12" fill="#ec109d"/><rect x="760" y="735" width="12" height="12" fill="#eb0f96"/><rect x="772" y="735" width="12" height="12" fill="#eb0e8f"/><rect x="784" y="735" width="12" height="12" fill="#eb0d89"/><rect x="796" y="735" width="12" height="12" fill="#ea0c83"/><rect x="808" y="735" width="12" height="12" fill="#ea0b7d"/><rect x="820" y="735" width="12" height="12" fill="#ea0a78"/><rect x="832" y="735" width="12" height="12" fill="#e90972"/><rect x="844" y="735" width="12" height="12" fill="#e9086d"/><rect x="856" y="735" width="12" height="12" fill="#e90767"/><rect x="868" y="735" width="12" height="12" fill="#e90662"/><rect x="880" y="735" width="12" height="12" fill="#e9065d"/><rect x="448" y="747" width="12" height="12" fill="#6bb2fc"/><rect x="460" y="747" width="12" height="12" fill="#6bb0fc"/><rect x="472" y="747" width="12" height="12" fill="#6aadfc"/><rect x="484" y="747" width="12" height="12" fill="#6aabfc"/><rect x="496" y="747" width="12" height="12" fill="#69a8fc"/><rect x="508" y="747" width="12" height="12" fill="#69a5fb"/><rect x="520" y="747" width="12" height="12" fill="#68a2fb"/><rect x="532" y="747" width="12" height="12" fill="#689ffb"/><rect x="544" y="747" width="12" height="12" fill="#6c9bfb"/><rect x="556" y="747" width="12" height="12" fill="#8497fb"/><rect x="568" y="747" width="12" height="12" fill="#9793fb"/><rect x="580" y="747" width="12" height="12" fill="#a98ffb"/><rect x="592" y="747" width="12" height="12" fill="#b989fb"/><rect x="604" y="747" width="12" height="12" fill="#c884fb"/><rect x="616" y="747" width="12" height="12" fill="#d67dfb"/><rect x="628" y="747" width="12" height="12" fill="#e476fb"/><rect x="640" y="747" width="12" height="12" fill="#f26dfb"/><rect x="652" y="747" width="12" height="12" fill="#f45eef"/><rect x="664" y="747" width="12" height="12" fill="#f24de1"/><rect x="676" y="747" width="12" height="12" fill="#f13bd5"/><rect x="688" y="747" width="12" height="12" fill="#ef20ca"/><rect x="700" y="747" width="12" height="12" fill="#ee16c0"/><rect x="712" y="747" width="12" height="12" fill="#ee15b7"/><rect x="724" y="747" width="12" height="12" fill="#ed13af"/><rect x="736" y="747" width="12" height="12" fill="#ed12a7"/><rect x="748" y="747" width="12" height="12" fill="#ec11a0"/><rect x="760" y="747" width="12" height="12" fill="#ec1099"/><rect x="772" y="747" width="12" height="12" fill="#eb0e93"/><rect x="784" y="747" width="12" height="12" fill="#eb0d8c"/><rect x="796" y="747" width="12" height="12" fill="#ea0c86"/><rect x="808" y="747" width="12" height="12" fill="#ea0b81"/><rect x="820" y="747" width="12" height="12" fill="#ea0a7b"/><rect x="832" y="747" width="12" height="12" fill="#ea0976"/><rect x="844" y="747" width="12" height="12" fill="#e90871"/><rect x="856" y="747" width="12" height="12" fill="#e9086b"/><rect x="460" y="759" width="12" height="12" fill="#69a7fc"/><rect x="472" y="759" width="12" height="12" fill="#69a4fb"/><rect x="484" y="759" width="12" height="12" fill="#68a1fb"/><rect x="496" y="759" width="12" height="12" fill="#689efb"/><rect x="508" y="759" width="12" height="12" fill="#679bfb"/><rect x="520" y="759" width="12" height="12" fill="#6798fb"/><rect x="532" y="759" width="12" height="12" fill="#6694fb"/><rect x="544" y="759" width="12" height="12" fill="#7290fb"/><rect x="556" y="759" width="12" height="12" fill="#878bfb"/><rect x="568" y="759" width="12" height="12" fill="#9a86fb"/><rect x="580" y="759" width="12" height="12" fill="#aa80fb"/><rect x="592" y="759" width="12" height="12" fill="#ba7afb"/><rect x="604" y="759" width="12" height="12" fill="#c873fb"/><rect x="616" y="759" width="12" height="12" fill="#d66bfa"/><rect x="628" y="759" width="12" height="12" fill="#e461fa"/><rect x="640" y="759" width="12" height="12" fill="#f156fa"/><rect x="652" y="759" width="12" height="12" fill="#f444f0"/><rect x="664" y="759" width="12" height="12" fill="#f22be2"/><rect x="676" y="759" width="12" height="12" fill="#f01ad7"/><rect x="688" y="759" width="12" height="12" fill="#ef19cc"/><rect x="700" y="759" width="12" height="12" fill="#ef17c2"/><rect x="712" y="759" width="12" height="12" fill="#ee15ba"/><rect x="724" y="759" width="12" height="12" fill="#ed14b1"/><rect x="736" y="759" width="12" height="12" fill="#ed13aa"/><rect x="748" y="759" width="12" height="12" fill="#ec11a3"/><rect x="760" y="759" width="12" height="12" fill="#ec109c"/><rect x="772" y="759" width="12" height="12" fill="#eb0f96"/><rect x="784" y="759" width="12" height="12" fill="#eb0e8f"/><rect x="796" y="759" width="12" height="12" fill="#eb0d8a"/><rect x="808" y="759" width="12" height="12" fill="#ea0c84"/><rect x="820" y="759" width="12" height="12" fill="#ea0b7f"/><rect x="832" y="759" width="12" height="12" fill="#ea0a79"/><rect x="460" y="771" width="12" height="12" fill="#689efb"/><rect x="472" y="771" width="12" height="12" fill="#679bfb"/><rect x="484" y="771" width="12" height="12" fill="#6798fb"/><rect x="496" y="771" width="12" height="12" fill="#6694fb"/><rect x="508" y="771" width="12" height="12" fill="#6590fb"/><rect x="520" y="771" width="12" height="12" fill="#658cfb"/><rect x="532" y="771" width="12" height="12" fill="#6488fb"/><rect x="544" y="771" width="12" height="12" fill="#7683fb"/><rect x="556" y="771" width="12" height="12" fill="#8b7efb"/><rect x="568" y="771" width="12" height="12" fill="#9c78fb"/><rect x="580" y="771" width="12" height="12" fill="#ac71fa"/><rect x="592" y="771" width="12" height="12" fill="#ba69fa"/><rect x="604" y="771" width="12" height="12" fill="#c860fa"/><rect x="616" y="771" width="12" height="12" fill="#d656fa"/><rect x="628" y="771" width="12" height="12" fill="#e348fa"/><rect x="640" y="771" width="12" height="12" fill="#f034fa"/><rect x="652" y="771" width="12" height="12" fill="#f31ff1"/><rect x="664" y="771" width="12" height="12" fill="#f21de4"/><rect x="676" y="771" width="12" height="12" fill="#f11bd8"/><rect x="688" y="771" width="12" height="12" fill="#f019ce"/><rect x="700" y="771" width="12" height="12" fill="#ef17c4"/><rect x="712" y="771" width="12" height="12" fill="#ee16bc"/><rect x="724" y="771" width="12" height="12" fill="#ed14b4"/><rect x="736" y="771" width="12" height="12" fill="#ed13ac"/><rect x="748" y="771" width="12" height="12" fill="#ec12a5"/><rect x="760" y="771" width="12" height="12" fill="#ec119f"/><rect x="772" y="771" width="12" height="12" fill="#ec0f98"/><rect x="784" y="771" width="12" height="12" fill="#eb0e92"/><rect x="796" y="771" width="12" height="12" fill="#eb0d8d"/><rect x="460" y="783" width="12" height="12" fill="#6694fb"/><rect x="472" y="783" width="12" height="12" fill="#6691fb"/><rect x="484" y="783" width="12" height="12" fill="#658dfb"/><rect x="496" y="783" width="12" height="12" fill="#6489fb"/><rect x="508" y="783" width="12" height="12" fill="#6485fb"/><rect x="520" y="783" width="12" height="12" fill="#6380fb"/><rect x="532" y="783" width="12" height="12" fill="#637bfb"/><rect x="544" y="783" width="12" height="12" fill="#7b76fa"/><rect x="556" y="783" width="12" height="12" fill="#8e6ffa"/><rect x="568" y="783" width="12" height="12" fill="#9e68fa"/><rect x="580" y="783" width="12" height="12" fill="#ad60fa"/><rect x="592" y="783" width="12" height="12" fill="#bb55fa"/><rect x="604" y="783" width="12" height="12" fill="#c949fa"/><rect x="616" y="783" width="12" height="12" fill="#d637fa"/><rect x="628" y="783" width="12" height="12" fill="#e221fa"/><rect x="640" y="783" width="12" height="12" fill="#ef21fa"/><rect x="652" y="783" width="12" height="12" fill="#f31ff2"/><rect x="664" y="783" width="12" height="12" fill="#f21de5"/><rect x="676" y="783" width="12" height="12" fill="#f11bda"/><rect x="688" y="783" width="12" height="12" fill="#f019d0"/><rect x="700" y="783" width="12" height="12" fill="#ef18c6"/><rect x="712" y="783" width="12" height="12" fill="#ee16be"/><rect x="724" y="783" width="12" height="12" fill="#ee15b6"/><rect x="736" y="783" width="12" height="12" fill="#ed13af"/><rect x="748" y="783" width="12" height="12" fill="#ed12a8"/><rect x="760" y="783" width="12" height="12" fill="#ec11a1"/><rect x="772" y="783" width="12" height="12" fill="#ec109b"/><rect x="472" y="795" width="12" height="12" fill="#6487fb"/><rect x="484" y="795" width="12" height="12" fill="#6483fb"/><rect x="496" y="795" width="12" height="12" fill="#637efb"/><rect x="508" y="795" width="12" height="12" fill="#6279fa"/><rect x="520" y="795" width="12" height="12" fill="#6274fa"/><rect x="532" y="795" width="12" height="12" fill="#696efa"/><rect x="544" y="795" width="12" height="12" fill="#7e67fa"/><rect x="556" y="795" width="12" height="12" fill="#905ffa"/><rect x="568" y="795" width="12" height="12" fill="#a055fa"/><rect x="580" y="795" width="12" height="12" fill="#ae4afa"/><rect x="592" y="795" width="12" height="12" fill="#bc3afa"/><rect x="604" y="795" width="12" height="12" fill="#c921fa"/><rect x="616" y="795" width="12" height="12" fill="#d621fa"/><rect x="628" y="795" width="12" height="12" fill="#e221fa"/><rect x="640" y="795" width="12" height="12" fill="#ef21fa"/><rect x="652" y="795" width="12" height="12" fill="#f31ff2"/><rect x="664" y="795" width="12" height="12" fill="#f21de6"/><rect x="676" y="795" width="12" height="12" fill="#f11bdb"/><rect x="688" y="795" width="12" height="12" fill="#f01ad1"/><rect x="700" y="795" width="12" height="12" fill="#ef18c8"/><rect x="712" y="795" width="12" height="12" fill="#ee16c0"/><rect x="724" y="795" width="12" height="12" fill="#ee15b8"/><rect x="736" y="795" width="12" height="12" fill="#ed14b1"/><rect x="748" y="795" width="12" height="12" fill="#ed13aa"/><rect x="472" y="807" width="12" height="12" fill="#637cfb"/><rect x="484" y="807" width="12" height="12" fill="#6277fa"/><rect x="496" y="807" width="12" height="12" fill="#6172fa"/><rect x="508" y="807" width="12" height="12" fill="#616cfa"/><rect x="520" y="807" width="12" height="12" fill="#6066fa"/><rect x="532" y="807" width="12" height="12" fill="#6e5efa"/><rect x="544" y="807" width="12" height="12" fill="#8255fa"/><rect x="556" y="807" width="12" height="12" fill="#934bfa"/><rect x="568" y="807" width="12" height="12" fill="#a23dfa"/><rect x="580" y="807" width="12" height="12" fill="#b025fa"/><rect x="592" y="807" width="12" height="12" fill="#bd21fa"/><rect x="604" y="807" width="12" height="12" fill="#ca21fa"/><rect x="616" y="807" width="12" height="12" fill="#d621fa"/><rect x="628" y="807" width="12" height="12" fill="#e221fa"/><rect x="640" y="807" width="12" height="12" fill="#ee21fa"/><rect x="652" y="807" width="12" height="12" fill="#f320f3"/><rect x="664" y="807" width="12" height="12" fill="#f21de7"/><rect x="676" y="807" width="12" height="12" fill="#f11cdd"/><rect x="688" y="807" width="12" height="12" fill="#f01ad3"/><rect x="700" y="807" width="12" height="12" fill="#ef18ca"/><rect x="712" y="807" width="12" height="12" fill="#ef17c2"/><rect x="724" y="807" width="12" height="12" fill="#ee15ba"/><rect x="472" y="819" width="12" height="12" fill="#6171fa"/><rect x="484" y="819" width="12" height="12" fill="#616bfa"/><rect x="496" y="819" width="12" height="12" fill="#6065fa"/><rect x="508" y="819" width="12" height="12" fill="#5f5efa"/><rect x="520" y="819" width="12" height="12" fill="#5f55fa"/><rect x="532" y="819" width="12" height="12" fill="#734bfa"/><rect x="544" y="819" width="12" height="12" fill="#853ffa"/><rect x="556" y="819" width="12" height="12" fill="#952bfa"/><rect x="568" y="819" width="12" height="12" fill="#a421fa"/><rect x="580" y="819" width="12" height="12" fill="#b121fa"/><rect x="592" y="819" width="12" height="12" fill="#be21fa"/><rect x="604" y="819" width="12" height="12" fill="#cb21fa"/><rect x="616" y="819" width="12" height="12" fill="#d721fa"/><rect x="628" y="819" width="12" height="12" fill="#e321fa"/><rect x="640" y="819" width="12" height="12" fill="#ee21fa"/><rect x="652" y="819" width="12" height="12" fill="#f420f4"/><rect x="664" y="819" width="12" height="12" fill="#f21ee8"/><rect x="676" y="819" width="12" height="12" fill="#f11cde"/><rect x="688" y="819" width="12" height="12" fill="#f01ad4"/><rect x="700" y="819" width="12" height="12" fill="#ef19cc"/><rect x="484" y="831" width="12" height="12" fill="#5f5dfa"/><rect x="496" y="831" width="12" height="12" fill="#5f55fa"/><rect x="508" y="831" width="12" height="12" fill="#5e4cfa"/><rect x="520" y="831" width="12" height="12" fill="#6140fa"/><rect x="532" y="831" width="12" height="12" fill="#772ffa"/><rect x="544" y="831" width="12" height="12" fill="#8821fa"/><rect x="556" y="831" width="12" height="12" fill="#9821fa"/><rect x="568" y="831" width="12" height="12" fill="#a621fa"/><rect x="580" y="831" width="12" height="12" fill="#b321fa"/><rect x="592" y="831" width="12" height="12" fill="#c021fa"/><rect x="604" y="831" width="12" height="12" fill="#cc21fa"/><rect x="616" y="831" width="12" height="12" fill="#d721fa"/><rect x="628" y="831" width="12" height="12" fill="#e321fa"/><rect x="640" y="831" width="12" height="12" fill="#ee21fa"/><rect x="652" y="831" width="12" height="12" fill="#f420f5"/><rect x="664" y="831" width="12" height="12" fill="#f21ee9"/><rect x="676" y="831" width="12" height="12" fill="#f11cdf"/><rect x="484" y="843" width="12" height="12" fill="#5e4dfa"/><rect x="496" y="843" width="12" height="12" fill="#5d42fa"/><rect x="508" y="843" width="12" height="12" fill="#5c33fa"/><rect x="520" y="843" width="12" height="12" fill="#6621fa"/><rect x="532" y="843" width="12" height="12" fill="#7b21fa"/><rect x="544" y="843" width="12" height="12" fill="#8c21fa"/><rect x="556" y="843" width="12" height="12" fill="#9b21fa"/><rect x="568" y="843" width="12" height="12" fill="#a821fa"/><rect x="580" y="843" width="12" height="12" fill="#b521fa"/><rect x="592" y="843" width="12" height="12" fill="#c121fa"/><rect x="604" y="843" width="12" height="12" fill="#cc21fa"/><rect x="616" y="843" width="12" height="12" fill="#d821fa"/><rect x="628" y="843" width="12" height="12" fill="#e321fa"/><rect x="640" y="843" width="12" height="12" fill="#ed21fa"/><rect x="496" y="855" width="12" height="12" fill="#5c21fa"/><rect x="508" y="855" width="12" height="12" fill="#5c21fa"/><rect x="520" y="855" width="12" height="12" fill="#6d21fa"/><rect x="532" y="855" width="12" height="12" fill="#7f21fa"/><rect x="544" y="855" width="12" height="12" fill="#8f21fa"/><rect x="556" y="855" width="12" height="12" fill="#9d21fa"/><rect x="568" y="855" width="12" height="12" fill="#aa21fa"/><rect x="580" y="855" width="12" height="12" fill="#b621fa"/><rect x="592" y="855" width="12" height="12" fill="#c221fa"/><rect x="604" y="855" width="12" height="12" fill="#cd21fa"/><rect x="616" y="855" width="12" height="12" fill="#d821fa"/><rect x="508" y="867" width="12" height="12" fill="#5c21fa"/><rect x="520" y="867" width="12" height="12" fill="#7221fa"/><rect x="532" y="867" width="12" height="12" fill="#8321fa"/><rect x="544" y="867" width="12" height="12" fill="#9221fa"/><rect x="556" y="867" width="12" height="12" fill="#a021fa"/><rect x="568" y="867" width="12" height="12" fill="#ac21fa"/><rect x="580" y="867" width="12" height="12" fill="#b821fa"/><rect x="592" y="867" width="12" height="12" fill="#c321fa"/><rect x="508" y="879" width="12" height="12" fill="#6221fa"/><rect x="520" y="879" width="12" height="12" fill="#7721fa"/><rect x="532" y="879" width="12" height="12" fill="#8721fa"/><rect x="544" y="879" width="12" height="12" fill="#9521fa"/><rect x="556" y="879" width="12" height="12" fill="#a221fa"/><rect x="568" y="879" width="12" height="12" fill="#ae21fa"/><rect x="532" y="891" width="12" height="12" fill="#8921fa"/><rect x="544" y="891" width="12" height="12" fill="#9721fa"/></g></g></svg>
<canvas id="cv" class="a" width="570" height="645"></canvas>
<svg id="chart" class="a" width="1920" height="1080" style="font-family:'Liberation Sans',sans-serif">
<path d="M370.94 194.4V969M408.6 194.4V969M446.27 194.4V969M483.93 194.4V969M521.6 194.4V969M559.26 194.4V969M596.92 194.4V969M634.59 194.4V969M672.26 194.4V969M709.92 194.4V969M747.59 194.4V969M785.25 194.4V969M822.91 194.4V969M860.58 194.4V969M898.25 194.4V969M935.91 194.4V969M973.57 194.4V969M1011.24 194.4V969M1048.91 194.4V969M333.8 931.87H1086.6M333.8 894.2H1086.6M333.8 856.54H1086.6M333.8 818.87H1086.6M333.8 781.21H1086.6M333.8 743.54H1086.6M333.8 705.88H1086.6M333.8 668.21H1086.6M333.8 630.55H1086.6M333.8 592.88H1086.6M333.8 555.22H1086.6M333.8 517.55H1086.6M333.8 479.89H1086.6M333.8 442.22H1086.6M333.8 404.56H1086.6M333.8 366.89H1086.6M333.8 329.23H1086.6M333.8 291.56H1086.6M333.8 253.89H1086.6M333.8 216.23H1086.6" stroke="#2a2a2a" stroke-width="0.85" stroke-dasharray="2 3.8" fill="none"/><path d="M370.94 969.5v-3.5M370.94 193.9v3.5M408.6 969.5v-7M408.6 193.9v7M446.27 969.5v-3.5M446.27 193.9v3.5M483.93 969.5v-7M483.93 193.9v7M521.6 969.5v-3.5M521.6 193.9v3.5M559.26 969.5v-7M559.26 193.9v7M596.92 969.5v-3.5M596.92 193.9v3.5M634.59 969.5v-7M634.59 193.9v7M672.26 969.5v-3.5M672.26 193.9v3.5M709.92 969.5v-7M709.92 193.9v7M747.59 969.5v-3.5M747.59 193.9v3.5M785.25 969.5v-7M785.25 193.9v7M822.91 969.5v-3.5M822.91 193.9v3.5M860.58 969.5v-7M860.58 193.9v7M898.25 969.5v-3.5M898.25 193.9v3.5M935.91 969.5v-7M935.91 193.9v7M973.57 969.5v-3.5M973.57 193.9v3.5M1011.24 969.5v-7M1011.24 193.9v7M1048.91 969.5v-3.5M1048.91 193.9v3.5M333.3 931.87h3.5M1087 931.87h-3.5M333.3 894.2h7M1087 894.2h-7M333.3 856.54h3.5M1087 856.54h-3.5M333.3 818.87h7M1087 818.87h-7M333.3 781.21h3.5M1087 781.21h-3.5M333.3 743.54h7M1087 743.54h-7M333.3 705.88h3.5M1087 705.88h-3.5M333.3 668.21h7M1087 668.21h-7M333.3 630.55h3.5M1087 630.55h-3.5M333.3 592.88h7M1087 592.88h-7M333.3 555.22h3.5M1087 555.22h-3.5M333.3 517.55h7M1087 517.55h-7M333.3 479.89h3.5M1087 479.89h-3.5M333.3 442.22h7M1087 442.22h-7M333.3 404.56h3.5M1087 404.56h-3.5M333.3 366.89h7M1087 366.89h-7M333.3 329.23h3.5M1087 329.23h-3.5M333.3 291.56h7M1087 291.56h-7M333.3 253.89h3.5M1087 253.89h-3.5M333.3 216.23h7M1087 216.23h-7" stroke="#000" stroke-width="1.3" fill="none"/><rect x="333.3" y="193.9" width="753.7" height="775.6" fill="none" stroke="#000" stroke-width="1.4"/><g font-size="16.7" fill="#000"><text x="333.27" y="989.5" text-anchor="middle" textLength="38" lengthAdjust="spacingAndGlyphs">−0.1</text><text x="408.6" y="989.5" text-anchor="middle" textLength="25" lengthAdjust="spacingAndGlyphs">0.0</text><text x="483.93" y="989.5" text-anchor="middle" textLength="25" lengthAdjust="spacingAndGlyphs">0.1</text><text x="559.26" y="989.5" text-anchor="middle" textLength="25" lengthAdjust="spacingAndGlyphs">0.2</text><text x="634.59" y="989.5" text-anchor="middle" textLength="25" lengthAdjust="spacingAndGlyphs">0.3</text><text x="709.92" y="989.5" text-anchor="middle" textLength="25" lengthAdjust="spacingAndGlyphs">0.4</text><text x="785.25" y="989.5" text-anchor="middle" textLength="25" lengthAdjust="spacingAndGlyphs">0.5</text><text x="860.58" y="989.5" text-anchor="middle" textLength="25" lengthAdjust="spacingAndGlyphs">0.6</text><text x="935.91" y="989.5" text-anchor="middle" textLength="25" lengthAdjust="spacingAndGlyphs">0.7</text><text x="1011.24" y="989.5" text-anchor="middle" textLength="25" lengthAdjust="spacingAndGlyphs">0.8</text><text x="1086.57" y="989.5" text-anchor="middle" textLength="25" lengthAdjust="spacingAndGlyphs">0.9</text><text x="326" y="974.13" text-anchor="end" textLength="38" lengthAdjust="spacingAndGlyphs">−0.1</text><text x="326" y="898.8" text-anchor="end" textLength="25" lengthAdjust="spacingAndGlyphs">0.0</text><text x="326" y="823.47" text-anchor="end" textLength="25" lengthAdjust="spacingAndGlyphs">0.1</text><text x="326" y="748.14" text-anchor="end" textLength="25" lengthAdjust="spacingAndGlyphs">0.2</text><text x="326" y="672.81" text-anchor="end" textLength="25" lengthAdjust="spacingAndGlyphs">0.3</text><text x="326" y="597.48" text-anchor="end" textLength="25" lengthAdjust="spacingAndGlyphs">0.4</text><text x="326" y="522.15" text-anchor="end" textLength="25" lengthAdjust="spacingAndGlyphs">0.5</text><text x="326" y="446.82" text-anchor="end" textLength="25" lengthAdjust="spacingAndGlyphs">0.6</text><text x="326" y="371.49" text-anchor="end" textLength="25" lengthAdjust="spacingAndGlyphs">0.7</text><text x="326" y="296.16" text-anchor="end" textLength="25" lengthAdjust="spacingAndGlyphs">0.8</text><text x="326" y="220.83" text-anchor="end" textLength="25" lengthAdjust="spacingAndGlyphs">0.9</text></g><text x="337" y="186.3" font-size="20" textLength="746" lengthAdjust="spacingAndGlyphs" fill="#000">CIE 1931 2 Degree Standard Observer - CIE 1931 Chromaticity Diagram</text><text transform="translate(273 583) rotate(-90)" font-size="20" text-anchor="middle" textLength="43" lengthAdjust="spacingAndGlyphs">CIE y</text>
<path d="M540.85 890.21 L540.79 890.22 L540.73 890.22 L540.67 890.23 L540.61 890.24 L540.55 890.24 L540.49 890.25 L540.44 890.26 L540.39 890.26 L540.34 890.27 L540.29 890.27 L540.25 890.26 L540.22 890.25 L540.18 890.26 L540.12 890.27 L540.06 890.30 L539.98 890.34 L539.91 890.38 L539.84 890.42 L539.79 890.45 L539.76 890.46 L539.74 890.46 L539.73 890.45 L539.72 890.45 L539.70 890.44 L539.68 890.45 L539.65 890.46 L539.62 890.48 L539.59 890.49 L539.56 890.50 L539.52 890.50 L539.49 890.49 L539.45 890.48 L539.41 890.48 L539.38 890.48 L539.34 890.49 L539.31 890.51 L539.27 890.54 L539.24 890.56 L539.21 890.57 L539.17 890.59 L539.14 890.59 L539.10 890.60 L539.05 890.60 L539.00 890.60 L538.94 890.60 L538.87 890.60 L538.80 890.59 L538.73 890.59 L538.67 890.58 L538.60 890.58 L538.54 890.59 L538.47 890.59 L538.39 890.58 L538.31 890.57 L538.23 890.56 L538.15 890.54 L538.07 890.52 L537.97 890.48 L537.86 890.43 L537.72 890.36 L537.57 890.27 L537.41 890.18 L537.24 890.08 L537.07 889.97 L536.89 889.84 L536.70 889.70 L536.50 889.55 L536.29 889.38 L536.06 889.20 L535.82 889.00 L535.55 888.79 L535.26 888.56 L534.96 888.31 L534.65 888.04 L534.32 887.76 L533.98 887.45 L533.63 887.12 L533.26 886.77 L532.87 886.40 L532.45 886.02 L532.01 885.62 L531.55 885.21 L531.05 884.77 L530.52 884.30 L529.96 883.81 L529.36 883.28 L528.73 882.73 L528.05 882.14 L527.34 881.51 L526.60 880.86 L525.82 880.18 L525.00 879.47 L524.15 878.72 L523.27 877.92 L522.34 877.07 L521.36 876.16 L520.34 875.18 L519.28 874.14 L518.18 873.02 L517.05 871.82 L515.87 870.55 L514.66 869.18 L513.40 867.68 L512.08 866.02 L510.67 864.16 L509.17 862.04 L507.56 859.64 L505.84 856.95 L504.01 853.95 L502.10 850.66 L500.10 847.05 L498.02 843.10 L495.84 838.77 L493.55 834.01 L491.16 828.78 L488.65 823.02 L486.02 816.71 L483.27 809.83 L480.39 802.34 L477.37 794.24 L474.20 785.49 L470.88 776.03 L467.44 765.82 L463.92 754.82 L460.36 743.00 L456.81 730.38 L453.28 716.98 L449.78 702.79 L446.29 687.79 L442.79 671.99 L439.30 655.42 L435.87 638.15 L432.52 620.30 L429.31 601.98 L426.27 583.31 L423.44 564.44 L420.86 545.46 L418.53 526.43 L416.49 507.45 L414.75 488.61 L413.33 470.04 L412.27 451.93 L411.60 434.35 L411.34 417.35 L411.51 400.92 L412.10 385.05 L413.13 369.81 L414.62 355.33 L416.59 341.72 L419.05 329.08 L421.98 317.46 L425.36 306.90 L429.14 297.51 L433.32 289.36 L437.87 282.51 L442.75 276.95 L447.90 272.60 L453.29 269.39 L458.86 267.25 L464.57 266.10 L470.41 265.88 L476.35 266.48 L482.38 267.76 L488.47 269.58 L494.60 271.82 L500.76 274.41 L506.94 277.30 L513.08 280.43 L519.16 283.73 L525.15 287.14 L531.04 290.63 L536.84 294.18 L542.57 297.82 L548.25 301.56 L553.89 305.40 L559.49 309.34 L565.05 313.36 L570.58 317.48 L576.09 321.68 L581.57 325.96 L587.05 330.34 L592.51 334.79 L597.95 339.32 L603.39 343.91 L608.81 348.57 L614.22 353.28 L619.62 358.06 L625.02 362.89 L630.41 367.76 L635.80 372.68 L641.19 377.65 L646.58 382.66 L651.97 387.71 L657.35 392.78 L662.74 397.89 L668.12 403.03 L673.51 408.19 L678.89 413.38 L684.28 418.58 L689.66 423.80 L695.04 429.04 L700.41 434.28 L705.78 439.53 L711.14 444.79 L716.50 450.05 L721.85 455.31 L727.19 460.58 L732.51 465.84 L737.82 471.09 L743.11 476.33 L748.39 481.57 L753.64 486.79 L758.87 491.99 L764.08 497.17 L769.26 502.33 L774.41 507.46 L779.53 512.57 L784.61 517.63 L789.65 522.66 L794.66 527.65 L799.62 532.59 L804.53 537.49 L809.41 542.34 L814.22 547.14 L818.99 551.87 L823.69 556.55 L828.33 561.17 L832.91 565.72 L837.42 570.20 L841.86 574.63 L846.23 578.98 L850.52 583.27 L854.72 587.46 L858.82 591.55 L862.79 595.52 L866.63 599.35 L870.36 603.06 L873.97 606.66 L877.50 610.17 L880.95 613.60 L884.32 616.97 L887.62 620.25 L890.83 623.44 L893.93 626.53 L896.91 629.49 L899.77 632.33 L902.52 635.05 L905.15 637.66 L907.68 640.17 L910.12 642.59 L912.46 644.92 L914.71 647.16 L916.87 649.31 L918.93 651.36 L920.90 653.33 L922.79 655.22 L924.59 657.01 L926.31 658.73 L927.94 660.37 L929.51 661.93 L931.01 663.41 L932.44 664.84 L933.80 666.19 L935.11 667.49 L936.37 668.74 L937.56 669.92 L938.70 671.06 L939.80 672.15 L940.85 673.20 L941.87 674.22 L942.86 675.20 L943.82 676.16 L944.74 677.07 L945.63 677.96 L946.48 678.81 L947.30 679.63 L948.08 680.41 L948.84 681.16 L949.56 681.88 L950.25 682.57 L950.91 683.23 L951.54 683.86 L952.15 684.47 L952.72 685.04 L953.26 685.57 L953.76 686.08 L954.24 686.55 L954.68 686.98 L955.09 687.40 L955.49 687.79 L955.87 688.17 L956.23 688.53 L956.57 688.87 L956.90 689.20 L957.21 689.51 L957.50 689.80 L957.77 690.07 L958.03 690.33 L958.27 690.57 L958.49 690.79 L958.69 690.99 L958.87 691.17 L959.03 691.33 L959.18 691.48 L959.33 691.63 L959.47 691.77 L959.61 691.91 L959.75 692.05 L959.88 692.18 L960.01 692.31 L960.13 692.43 L960.24 692.54 L960.35 692.65 L960.45 692.75 L960.56 692.86 L960.66 692.96 L960.77 693.07 L960.88 693.18 L960.98 693.28 L961.08 693.38 L961.18 693.48 L961.28 693.58 L961.38 693.68 L961.47 693.77 L961.56 693.86 L961.63 693.93 L961.69 693.99 L961.74 694.04 L961.78 694.08 L961.82 694.12 L961.85 694.15 L961.89 694.19 L961.92 694.22 L961.94 694.24 L961.97 694.27 L961.99 694.29 L962.01 694.31 L962.03 694.33 L962.04 694.34 L962.04 694.34 L962.04 694.34 L962.04 694.34 L962.04 694.34 L962.04 694.34 L962.04 694.34 L962.04 694.34 L962.04 694.34 L962.04 694.34 L962.04 694.34 L962.04 694.34 L962.04 694.34 L962.04 694.34 L962.04 694.34 L962.04 694.34 L962.04 694.34 L962.04 694.34 L962.04 694.34 L962.04 694.34 L962.04 694.34 L962.04 694.34 L962.04 694.34 L962.04 694.34 L962.04 694.34 L962.04 694.34 L962.04 694.34 L962.04 694.34 L962.04 694.34 L962.04 694.34 L962.04 694.34 L962.04 694.34 L962.04 694.34 L962.04 694.34 L962.04 694.34 L962.04 694.34 L962.04 694.34 L962.04 694.34 L962.04 694.34 L962.04 694.34 L962.04 694.34 L962.04 694.34 L962.04 694.34 L962.04 694.34 L962.04 694.34 L962.04 694.34 L962.04 694.34 L962.04 694.34 L962.04 694.34 L962.04 694.34 L962.04 694.34 L962.04 694.34 L962.04 694.34 L962.04 694.34 L962.04 694.34 L962.04 694.34 L962.04 694.34 L962.04 694.34 L962.04 694.34 L962.04 694.34 L962.04 694.34 L962.04 694.34 L962.04 694.34 L962.04 694.34 L962.04 694.34 L962.04 694.34 L962.04 694.34 L962.04 694.34 L962.04 694.34 L962.04 694.34 L962.04 694.34 L962.04 694.34 L962.04 694.34 L962.04 694.34 L962.04 694.34 L962.04 694.34 L962.04 694.34 L962.04 694.34 L962.04 694.34 L962.04 694.34 L962.04 694.34 L962.04 694.34 L962.04 694.34 L962.04 694.34 L962.04 694.34 L962.04 694.34 L962.04 694.34 L962.04 694.34 L962.04 694.34 L962.04 694.34 L962.04 694.34 L962.04 694.34 L962.04 694.34 L962.04 694.34 L962.04 694.34 L962.04 694.34 L962.04 694.34 L962.04 694.34 L962.04 694.34 L962.04 694.34 L962.04 694.34 L962.04 694.34 L962.04 694.34 L962.04 694.34 L962.04 694.34 L962.04 694.34 L962.04 694.34 L962.04 694.34 L962.04 694.34 L962.04 694.34 L962.04 694.34 L962.04 694.34 L962.04 694.34 L962.04 694.34 L962.04 694.34 L962.04 694.34 L962.04 694.34 L962.04 694.34 L962.04 694.34 L962.04 694.34 L962.04 694.34 L962.04 694.34 L962.04 694.34 L962.04 694.34 L962.04 694.34 L962.04 694.34 L962.04 694.34 L962.04 694.34 L962.04 694.34 L962.04 694.34 L962.04 694.34 L962.04 694.34Z" stroke="#000" stroke-width="2.8" fill="none" stroke-linejoin="round"/><path d="M539.52 890.50L535.01 912.64M517.05 871.82L500.41 887.13M502.10 850.66L482.33 861.61M477.37 794.24L456.13 801.94M442.79 671.99L420.68 676.65M414.75 488.61L392.22 490.33M419.05 329.08L397.14 323.55M464.57 266.10L463.74 243.51M581.57 325.96L595.68 308.31M689.66 423.80L705.42 407.60M794.66 527.65L810.61 511.64M880.95 613.60L896.89 597.59M929.51 661.93L945.45 645.91M962.04 694.34L978.02 678.36" stroke="#000" stroke-width="2.8" fill="none"/><circle cx="539.52" cy="890.50" r="4.3" fill="#000"/><circle cx="517.05" cy="871.82" r="4.3" fill="#000"/><circle cx="502.10" cy="850.66" r="4.3" fill="#000"/><circle cx="477.37" cy="794.24" r="4.3" fill="#000"/><circle cx="442.79" cy="671.99" r="4.3" fill="#000"/><circle cx="414.75" cy="488.61" r="4.3" fill="#000"/><circle cx="419.05" cy="329.08" r="4.3" fill="#000"/><circle cx="464.57" cy="266.10" r="4.3" fill="#000"/><circle cx="581.57" cy="325.96" r="4.3" fill="#000"/><circle cx="689.66" cy="423.80" r="4.3" fill="#000"/><circle cx="794.66" cy="527.65" r="4.3" fill="#000"/><circle cx="880.95" cy="613.60" r="4.3" fill="#000"/><circle cx="929.51" cy="661.93" r="4.3" fill="#000"/><circle cx="962.04" cy="694.34" r="4.3" fill="#000"/><g font-size="14.3" fill="#1a1a1a"><text x="532.0" y="924.2" text-anchor="end" textLength="25" lengthAdjust="spacingAndGlyphs">390</text><text x="493.4" y="896.4" text-anchor="end" textLength="25" lengthAdjust="spacingAndGlyphs">460</text><text x="474.2" y="869.5" text-anchor="end" textLength="25" lengthAdjust="spacingAndGlyphs">470</text><text x="447.5" y="808.7" text-anchor="end" textLength="25" lengthAdjust="spacingAndGlyphs">480</text><text x="411.8" y="682.4" text-anchor="end" textLength="25" lengthAdjust="spacingAndGlyphs">490</text><text x="383.2" y="495.1" text-anchor="end" textLength="25" lengthAdjust="spacingAndGlyphs">500</text><text x="388.3" y="325.9" text-anchor="end" textLength="25" lengthAdjust="spacingAndGlyphs">510</text><text x="462.0" y="240.2" text-anchor="end" textLength="25" lengthAdjust="spacingAndGlyphs">520</text><text x="601.9" y="306.6" textLength="25" lengthAdjust="spacingAndGlyphs">540</text><text x="712.2" y="406.4" textLength="25" lengthAdjust="spacingAndGlyphs">560</text><text x="817.4" y="510.5" textLength="25" lengthAdjust="spacingAndGlyphs">580</text><text x="903.7" y="596.5" textLength="25" lengthAdjust="spacingAndGlyphs">600</text><text x="952.3" y="644.8" textLength="25" lengthAdjust="spacingAndGlyphs">620</text><text x="984.8" y="677.2" textLength="25" lengthAdjust="spacingAndGlyphs">700</text></g><path d="M945.70 673.48L532.89 268.96L505.02 861.05Z" stroke="#5c06bd" stroke-width="2.8" fill="none" stroke-linejoin="round"/><circle cx="945.70" cy="673.48" r="4.2" fill="#5c06bd" stroke="#000" stroke-width="0.5" stroke-opacity="0.6"/><circle cx="532.89" cy="268.96" r="4.2" fill="#5c06bd" stroke="#000" stroke-width="0.5" stroke-opacity="0.6"/><circle cx="505.02" cy="861.05" r="4.2" fill="#5c06bd" stroke="#000" stroke-width="0.5" stroke-opacity="0.6"/><path d="M890.71 645.61L634.59 442.22L521.60 849.00Z" stroke="#b3000f" stroke-width="2.8" fill="none" stroke-linejoin="round"/><circle cx="890.71" cy="645.61" r="4.2" fill="#b3000f" stroke="#000" stroke-width="0.5" stroke-opacity="0.6"/><circle cx="634.59" cy="442.22" r="4.2" fill="#b3000f" stroke="#000" stroke-width="0.5" stroke-opacity="0.6"/><circle cx="521.60" cy="849.00" r="4.2" fill="#b3000f" stroke="#000" stroke-width="0.5" stroke-opacity="0.6"/><circle cx="650.92" cy="639.83" r="4.2" fill="#5c06bd"/><circle cx="644.16" cy="646.36" r="4.2" fill="#b3000f"/><rect x="922.7" y="204.6" width="153.6" height="65.2" fill="#fff" stroke="#000" stroke-width="1.3"/>
<path d="M936 220.6H968" stroke="#5c06bd" stroke-width="2.8"/>
<path d="M936 250.5H968" stroke="#b3000f" stroke-width="2.8"/>
<text x="990" y="227.6" font-size="20" textLength="76" lengthAdjust="spacingAndGlyphs">ACEScg</text>
<text x="990" y="257.6" font-size="20" textLength="53" lengthAdjust="spacingAndGlyphs">sRGB</text>
</svg>
<div id="hdr" class="a"></div>
<svg class="a" style="left:0;top:71px" width="200" height="87">
 <text x="60" y="50" font-size="34" font-weight="bold" font-style="italic" fill="#fafafa" stroke="#e9e9e9" stroke-width="1" textLength="112" lengthAdjust="spacingAndGlyphs">AVFX</text>
 <g fill="none" stroke="#f0f0f0" stroke-width="1.5">
  <path d="M42 82l14-14 10 4 8-6 10 8 12-4 8 7 12-6 10 5 14-8 12 3"/>
  <path d="M52 30l12-6 10 3M120 22l10-4 12 6M168 40l20-22M172 60l14 4"/>
  <path d="M60 88l10 4M100 86l14 6M140 80l12 2"/>
 </g>
</svg>
<div id="brand" class="a">Toadstorm Nerdblog</div>
<div id="pin" class="a"><svg class="a" style="left:4px;top:4px" width="17" height="17"><circle cx="8.4" cy="8.5" r="7.4" fill="none" stroke="#fff" stroke-width="1.3"/><path d="M6.6 9.6c-.9-1.6-.2-4 2.2-4.1 2.3-.1 3.2 1.8 2.7 3.6-.5 1.7-2 2.3-3.2 1.4M8.4 7.2l-1.4 8.3" stroke="#fff" stroke-width="1.4" fill="none" stroke-linecap="round"/></svg><span>Save</span></div>
<div id="fs" class="a"><svg class="a" style="left:0;top:0" width="30" height="30"><rect x="5.7" y="5.6" width="17.3" height="17.1" rx="3.5" fill="#fff"/><rect x="9.9" y="9.5" width="9.2" height="9.1" fill="#929292"/><rect x="13.6" y="5" width="2.2" height="18" fill="#929292"/><rect x="5" y="12.4" width="19" height="2.2" fill="#929292"/></svg></div>
<svg class="a" style="left:0;top:0" width="1920" height="300"><g fill="#3a5372" stroke="#3a5372" stroke-width="0.3" font-family="Liberation Sans,sans-serif"><text x="1336.4" y="188.2" font-size="23.0" textLength="76.5" lengthAdjust="spacingAndGlyphs">pipeline</text><text x="1417.5" y="188.4" font-size="13.0" textLength="47.7" lengthAdjust="spacingAndGlyphs">pixel art</text><text x="1470.2" y="188.4" font-size="13.0" textLength="25.1" lengthAdjust="spacingAndGlyphs">ptex</text><text x="1501.1" y="188.2" font-size="27.5" textLength="81.4" lengthAdjust="spacingAndGlyphs">python</text><text x="1588.1" y="188.4" font-size="13.0" textLength="53.4" lengthAdjust="spacingAndGlyphs">QF Radio</text><text x="1336.0" y="221.6" font-size="13.0" textLength="44.5" lengthAdjust="spacingAndGlyphs">rename</text><text x="1385.1" y="221.6" font-size="16.5" textLength="73.6" lengthAdjust="spacingAndGlyphs">rendering</text><text x="1462.8" y="221.6" font-size="13.0" textLength="42.2" lengthAdjust="spacingAndGlyphs">rigging</text><text x="1508.9" y="221.6" font-size="13.0" textLength="47.8" lengthAdjust="spacingAndGlyphs">shaders</text><text x="1560.3" y="221.6" font-size="13.0" textLength="33.4" lengthAdjust="spacingAndGlyphs">SOuP</text><text x="1336.0" y="252.0" font-size="13.0" textLength="68.5" lengthAdjust="spacingAndGlyphs">subprocess</text><text x="1409.1" y="252.0" font-size="13.0" textLength="56.9" lengthAdjust="spacingAndGlyphs">timewarp</text><text x="1469.5" y="252.0" font-size="13.0" textLength="61.6" lengthAdjust="spacingAndGlyphs">toadstorm</text><text x="1535.8" y="251.5" font-size="18.3" textLength="44.1" lengthAdjust="spacingAndGlyphs">trails</text><text x="1583.9" y="251.5" font-size="13.8" textLength="22.3" lengthAdjust="spacingAndGlyphs">UV</text><text x="1610.3" y="251.5" font-size="18.3" textLength="37.2" lengthAdjust="spacingAndGlyphs">vray</text></g></svg>
<svg class="a" style="left:630px;top:450px" width="30" height="30"><path d="M7 2v19l4.5-4.2 3.2 6.5 2.8-1.3-3.1-6.4h6z" fill="#fff" stroke="#000" stroke-width="1.1" stroke-linejoin="round"/></svg>
<svg class="a" style="left:500px;top:797px" width="25" height="25"><path d="M12.5 4v17M4 12.5h17" stroke="#fff" stroke-width="1.3" opacity="0.9"/></svg>
<div id="dl" class="a">
 <svg class="a" style="left:20px;top:15px" width="20" height="22"><path d="M2.5 1.5h8l3 3v14h-11z" fill="#fff" stroke="#9aa0a6" stroke-width="1"/><rect x="4.5" y="8.5" width="7" height="5" fill="#eee" stroke="#80868b" stroke-width="1"/></svg>
 <div class="a" style="left:49px;top:17px;font-size:12.4px;letter-spacing:-0.15px;color:#3c4043">greenwich_park_0....hdr</div>
 <svg class="a" style="left:198px;top:16px" width="18" height="18"><path d="M4 11l5-5 5 5" stroke="#5f6368" stroke-width="1.6" fill="none"/></svg>
 <div class="a" style="left:230px;top:6px;width:1px;height:36px;background:#dadce0"></div>
 <div class="a" style="left:1806px;top:7px;width:77px;height:32px;border:1px solid #dadce0;border-radius:4px;font-size:13px;color:#3c4043;text-align:center;line-height:30px">Show all</div>
 <svg class="a" style="left:1893px;top:14px" width="18" height="18"><path d="M4 4l10 10M14 4L4 14" stroke="#5f6368" stroke-width="1.8"/></svg>
</div>
<div id="bot" class="a"></div>
<div class="sub" style="left:728px;top:886px;width:463px;padding-left:2px">yourself but it will mean that there's</div>
<div class="sub" style="left:722px;top:930px;width:476px;padding-left:1px">much less granularity between like if</div>
<div class="sub" style="left:696px;top:973.7px;width:527px;padding-left:2px">you have</div>
<svg class="a" style="left:0;top:0" width="1920" height="1080"><g fill="#0a0a0a"><rect x="752.2" y="974" width="1.4" height="34"/><rect x="824.2" y="974" width="1.4" height="34"/><rect x="908.1" y="974" width="1.4" height="34"/><rect x="960.9" y="974" width="1.4" height="34"/><rect x="1015.2" y="974" width="1.4" height="34"/><rect x="1044.4" y="974" width="1.4" height="34"/><rect x="1094.0" y="974" width="1.4" height="34"/></g></svg>

<div id="zh" class="a">你有绿色，像这样，你可以拥有Bo和Isis的最大绿色。</div>
<script>
(function(){
var cv=document.getElementById('cv');var ctx=cv.getContext('2d');
var W=cv.width,H=cv.height,OX=400,OY=255;
var img=ctx.createImageData(W,H),d=img.data;
var M=[0.80,0.094,0.106, 0.0,0.985,0.015, 0.002,0.046,0.952];
function dec(v){return v<=0.04045?v/12.92:Math.pow((v+0.055)/1.055,2.4);}
function enc(v){return v<=0.0031308?12.92*v:1.055*Math.pow(v,1/2.4)-0.055;}
for(var j=0;j<H;j++){
 var y=(894.2-(OY+j+0.5))/753.3;
 for(var i=0;i<W;i++){
  var x=(OX+i+0.5-408.6)/753.3;
  var k=(j*W+i)*4;
  if(y<=0.001){d[k+3]=0;continue;}
  var Xc=x/y,Yc=1,Zc=(1-x-y)/y;
  var r=3.2404542*Xc-1.5371385*Yc-0.4985314*Zc;
  var g=-0.9692660*Xc+1.8760108*Yc+0.0415560*Zc;
  var b=0.0556434*Xc-0.2040259*Yc+1.0572252*Zc;
  r=enc(r);g=enc(g);b=enc(b);
  var m=Math.max(r,g,b);
  r/=m;g/=m;b/=m;
  r=r<0?0:r>1?1:r;g=g<0?0:g>1?1:g;b=b<0?0:b>1?1:b;
  r=dec(r);g=dec(g);b=dec(b);
  var r2=M[0]*r+M[1]*g+M[2]*b,g2=M[3]*r+M[4]*g+M[5]*b,b2=M[6]*r+M[7]*g+M[8]*b;
  d[k]=enc(r2)*255;d[k+1]=enc(g2)*255;d[k+2]=enc(b2)*255;d[k+3]=255;
 }
}
var off=document.createElement('canvas');off.width=W;off.height=H;off.getContext('2d').putImageData(img,0,0);
var p=new Path2D("M540.85 890.21 L540.79 890.22 L540.73 890.22 L540.67 890.23 L540.61 890.24 L540.55 890.24 L540.49 890.25 L540.44 890.26 L540.39 890.26 L540.34 890.27 L540.29 890.27 L540.25 890.26 L540.22 890.25 L540.18 890.26 L540.12 890.27 L540.06 890.30 L539.98 890.34 L539.91 890.38 L539.84 890.42 L539.79 890.45 L539.76 890.46 L539.74 890.46 L539.73 890.45 L539.72 890.45 L539.70 890.44 L539.68 890.45 L539.65 890.46 L539.62 890.48 L539.59 890.49 L539.56 890.50 L539.52 890.50 L539.49 890.49 L539.45 890.48 L539.41 890.48 L539.38 890.48 L539.34 890.49 L539.31 890.51 L539.27 890.54 L539.24 890.56 L539.21 890.57 L539.17 890.59 L539.14 890.59 L539.10 890.60 L539.05 890.60 L539.00 890.60 L538.94 890.60 L538.87 890.60 L538.80 890.59 L538.73 890.59 L538.67 890.58 L538.60 890.58 L538.54 890.59 L538.47 890.59 L538.39 890.58 L538.31 890.57 L538.23 890.56 L538.15 890.54 L538.07 890.52 L537.97 890.48 L537.86 890.43 L537.72 890.36 L537.57 890.27 L537.41 890.18 L537.24 890.08 L537.07 889.97 L536.89 889.84 L536.70 889.70 L536.50 889.55 L536.29 889.38 L536.06 889.20 L535.82 889.00 L535.55 888.79 L535.26 888.56 L534.96 888.31 L534.65 888.04 L534.32 887.76 L533.98 887.45 L533.63 887.12 L533.26 886.77 L532.87 886.40 L532.45 886.02 L532.01 885.62 L531.55 885.21 L531.05 884.77 L530.52 884.30 L529.96 883.81 L529.36 883.28 L528.73 882.73 L528.05 882.14 L527.34 881.51 L526.60 880.86 L525.82 880.18 L525.00 879.47 L524.15 878.72 L523.27 877.92 L522.34 877.07 L521.36 876.16 L520.34 875.18 L519.28 874.14 L518.18 873.02 L517.05 871.82 L515.87 870.55 L514.66 869.18 L513.40 867.68 L512.08 866.02 L510.67 864.16 L509.17 862.04 L507.56 859.64 L505.84 856.95 L504.01 853.95 L502.10 850.66 L500.10 847.05 L498.02 843.10 L495.84 838.77 L493.55 834.01 L491.16 828.78 L488.65 823.02 L486.02 816.71 L483.27 809.83 L480.39 802.34 L477.37 794.24 L474.20 785.49 L470.88 776.03 L467.44 765.82 L463.92 754.82 L460.36 743.00 L456.81 730.38 L453.28 716.98 L449.78 702.79 L446.29 687.79 L442.79 671.99 L439.30 655.42 L435.87 638.15 L432.52 620.30 L429.31 601.98 L426.27 583.31 L423.44 564.44 L420.86 545.46 L418.53 526.43 L416.49 507.45 L414.75 488.61 L413.33 470.04 L412.27 451.93 L411.60 434.35 L411.34 417.35 L411.51 400.92 L412.10 385.05 L413.13 369.81 L414.62 355.33 L416.59 341.72 L419.05 329.08 L421.98 317.46 L425.36 306.90 L429.14 297.51 L433.32 289.36 L437.87 282.51 L442.75 276.95 L447.90 272.60 L453.29 269.39 L458.86 267.25 L464.57 266.10 L470.41 265.88 L476.35 266.48 L482.38 267.76 L488.47 269.58 L494.60 271.82 L500.76 274.41 L506.94 277.30 L513.08 280.43 L519.16 283.73 L525.15 287.14 L531.04 290.63 L536.84 294.18 L542.57 297.82 L548.25 301.56 L553.89 305.40 L559.49 309.34 L565.05 313.36 L570.58 317.48 L576.09 321.68 L581.57 325.96 L587.05 330.34 L592.51 334.79 L597.95 339.32 L603.39 343.91 L608.81 348.57 L614.22 353.28 L619.62 358.06 L625.02 362.89 L630.41 367.76 L635.80 372.68 L641.19 377.65 L646.58 382.66 L651.97 387.71 L657.35 392.78 L662.74 397.89 L668.12 403.03 L673.51 408.19 L678.89 413.38 L684.28 418.58 L689.66 423.80 L695.04 429.04 L700.41 434.28 L705.78 439.53 L711.14 444.79 L716.50 450.05 L721.85 455.31 L727.19 460.58 L732.51 465.84 L737.82 471.09 L743.11 476.33 L748.39 481.57 L753.64 486.79 L758.87 491.99 L764.08 497.17 L769.26 502.33 L774.41 507.46 L779.53 512.57 L784.61 517.63 L789.65 522.66 L794.66 527.65 L799.62 532.59 L804.53 537.49 L809.41 542.34 L814.22 547.14 L818.99 551.87 L823.69 556.55 L828.33 561.17 L832.91 565.72 L837.42 570.20 L841.86 574.63 L846.23 578.98 L850.52 583.27 L854.72 587.46 L858.82 591.55 L862.79 595.52 L866.63 599.35 L870.36 603.06 L873.97 606.66 L877.50 610.17 L880.95 613.60 L884.32 616.97 L887.62 620.25 L890.83 623.44 L893.93 626.53 L896.91 629.49 L899.77 632.33 L902.52 635.05 L905.15 637.66 L907.68 640.17 L910.12 642.59 L912.46 644.92 L914.71 647.16 L916.87 649.31 L918.93 651.36 L920.90 653.33 L922.79 655.22 L924.59 657.01 L926.31 658.73 L927.94 660.37 L929.51 661.93 L931.01 663.41 L932.44 664.84 L933.80 666.19 L935.11 667.49 L936.37 668.74 L937.56 669.92 L938.70 671.06 L939.80 672.15 L940.85 673.20 L941.87 674.22 L942.86 675.20 L943.82 676.16 L944.74 677.07 L945.63 677.96 L946.48 678.81 L947.30 679.63 L948.08 680.41 L948.84 681.16 L949.56 681.88 L950.25 682.57 L950.91 683.23 L951.54 683.86 L952.15 684.47 L952.72 685.04 L953.26 685.57 L953.76 686.08 L954.24 686.55 L954.68 686.98 L955.09 687.40 L955.49 687.79 L955.87 688.17 L956.23 688.53 L956.57 688.87 L956.90 689.20 L957.21 689.51 L957.50 689.80 L957.77 690.07 L958.03 690.33 L958.27 690.57 L958.49 690.79 L958.69 690.99 L958.87 691.17 L959.03 691.33 L959.18 691.48 L959.33 691.63 L959.47 691.77 L959.61 691.91 L959.75 692.05 L959.88 692.18 L960.01 692.31 L960.13 692.43 L960.24 692.54 L960.35 692.65 L960.45 692.75 L960.56 692.86 L960.66 692.96 L960.77 693.07 L960.88 693.18 L960.98 693.28 L961.08 693.38 L961.18 693.48 L961.28 693.58 L961.38 693.68 L961.47 693.77 L961.56 693.86 L961.63 693.93 L961.69 693.99 L961.74 694.04 L961.78 694.08 L961.82 694.12 L961.85 694.15 L961.89 694.19 L961.92 694.22 L961.94 694.24 L961.97 694.27 L961.99 694.29 L962.01 694.31 L962.03 694.33 L962.04 694.34 L962.04 694.34 L962.04 694.34 L962.04 694.34 L962.04 694.34 L962.04 694.34 L962.04 694.34 L962.04 694.34 L962.04 694.34 L962.04 694.34 L962.04 694.34 L962.04 694.34 L962.04 694.34 L962.04 694.34 L962.04 694.34 L962.04 694.34 L962.04 694.34 L962.04 694.34 L962.04 694.34 L962.04 694.34 L962.04 694.34 L962.04 694.34 L962.04 694.34 L962.04 694.34 L962.04 694.34 L962.04 694.34 L962.04 694.34 L962.04 694.34 L962.04 694.34 L962.04 694.34 L962.04 694.34 L962.04 694.34 L962.04 694.34 L962.04 694.34 L962.04 694.34 L962.04 694.34 L962.04 694.34 L962.04 694.34 L962.04 694.34 L962.04 694.34 L962.04 694.34 L962.04 694.34 L962.04 694.34 L962.04 694.34 L962.04 694.34 L962.04 694.34 L962.04 694.34 L962.04 694.34 L962.04 694.34 L962.04 694.34 L962.04 694.34 L962.04 694.34 L962.04 694.34 L962.04 694.34 L962.04 694.34 L962.04 694.34 L962.04 694.34 L962.04 694.34 L962.04 694.34 L962.04 694.34 L962.04 694.34 L962.04 694.34 L962.04 694.34 L962.04 694.34 L962.04 694.34 L962.04 694.34 L962.04 694.34 L962.04 694.34 L962.04 694.34 L962.04 694.34 L962.04 694.34 L962.04 694.34 L962.04 694.34 L962.04 694.34 L962.04 694.34 L962.04 694.34 L962.04 694.34 L962.04 694.34 L962.04 694.34 L962.04 694.34 L962.04 694.34 L962.04 694.34 L962.04 694.34 L962.04 694.34 L962.04 694.34 L962.04 694.34 L962.04 694.34 L962.04 694.34 L962.04 694.34 L962.04 694.34 L962.04 694.34 L962.04 694.34 L962.04 694.34 L962.04 694.34 L962.04 694.34 L962.04 694.34 L962.04 694.34 L962.04 694.34 L962.04 694.34 L962.04 694.34 L962.04 694.34 L962.04 694.34 L962.04 694.34 L962.04 694.34 L962.04 694.34 L962.04 694.34 L962.04 694.34 L962.04 694.34 L962.04 694.34 L962.04 694.34 L962.04 694.34 L962.04 694.34 L962.04 694.34 L962.04 694.34 L962.04 694.34 L962.04 694.34 L962.04 694.34 L962.04 694.34 L962.04 694.34 L962.04 694.34 L962.04 694.34 L962.04 694.34 L962.04 694.34 L962.04 694.34 L962.04 694.34 L962.04 694.34 L962.04 694.34 L962.04 694.34 L962.04 694.34 L962.04 694.34 L962.04 694.34 L962.04 694.34Z");
ctx.save();ctx.translate(-OX,-OY);ctx.clip(p);ctx.drawImage(off,OX,OY);ctx.restore();
})();
</script>
</body></html>
